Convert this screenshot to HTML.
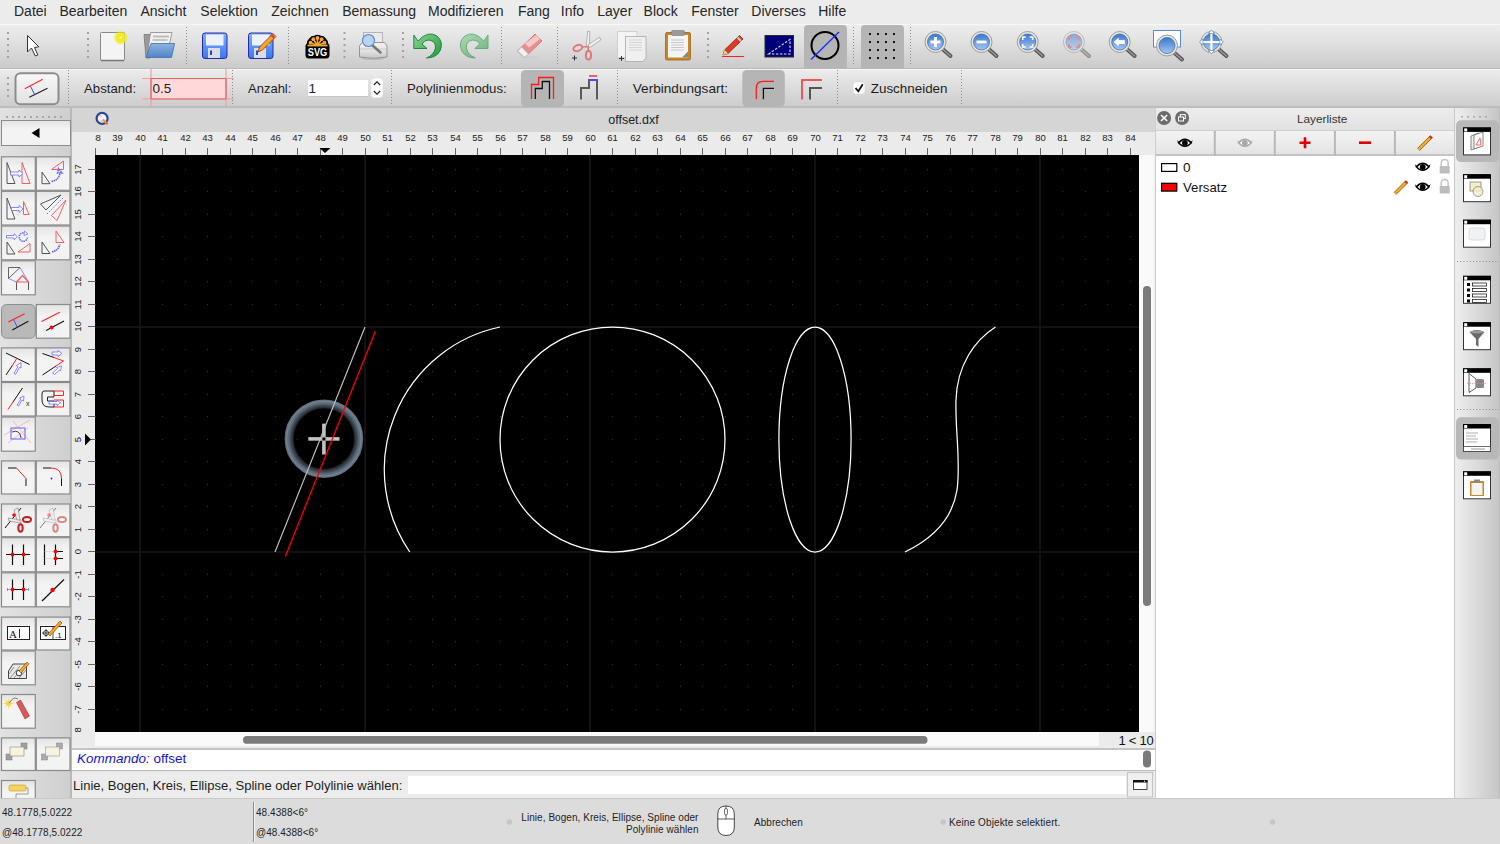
<!DOCTYPE html><html><head><meta charset="utf-8"><style>
*{margin:0;padding:0;box-sizing:border-box}
html,body{width:1500px;height:844px;overflow:hidden;background:#e6e6e6;font-family:"Liberation Sans",sans-serif;color:#1e1e1e}
.a{position:absolute}
.t{position:absolute;white-space:pre;line-height:16px;z-index:2}
.menu{font-size:14px;color:#262626}
.dotv{position:absolute;width:1px;border-left:1px dotted #8a8a8a}
.grip{position:absolute;width:3px}
.grip i{display:block;width:3px;height:3px;border-radius:2px;background:#b0b0b0;margin-bottom:3px}
.tb{position:absolute;border:1px solid #a9a9a9;background:linear-gradient(#f7f7f7,#e9e9e9);}
.act{position:absolute;background:#b6b6b6;border-radius:5px}
</style></head><body>
<div class="a" style="left:0;top:0;width:1500px;height:24px;background:#ececec"></div>
<div class="t menu" style="left:14px;top:2.5px">Datei</div>
<div class="t menu" style="left:59.5px;top:2.5px">Bearbeiten</div>
<div class="t menu" style="left:140.5px;top:2.5px">Ansicht</div>
<div class="t menu" style="left:200.3px;top:2.5px">Selektion</div>
<div class="t menu" style="left:271.2px;top:2.5px">Zeichnen</div>
<div class="t menu" style="left:342.2px;top:2.5px">Bemassung</div>
<div class="t menu" style="left:428px;top:2.5px">Modifizieren</div>
<div class="t menu" style="left:518px;top:2.5px">Fang</div>
<div class="t menu" style="left:560.8px;top:2.5px">Info</div>
<div class="t menu" style="left:597.3px;top:2.5px">Layer</div>
<div class="t menu" style="left:643.6px;top:2.5px">Block</div>
<div class="t menu" style="left:691.2px;top:2.5px">Fenster</div>
<div class="t menu" style="left:751.3px;top:2.5px">Diverses</div>
<div class="t menu" style="left:818.2px;top:2.5px">Hilfe</div>
<div class="a" style="left:0;top:24px;width:1500px;height:45px;background:linear-gradient(#ededed,#e4e4e4 30%,#cbcbcb);border-top:1px solid #f8f8f8;border-bottom:1px solid #b8b8b8"></div>
<div class="a" style="left:0;top:69px;width:1500px;height:39px;background:linear-gradient(#ececec,#e2e2e2 30%,#cdcdcd);border-top:1px solid #f6f6f6;border-bottom:2px solid #bdbdbd"></div>
<div class="t" style="left:84px;top:80.5px;font-size:13.2px;color:#1e1e1e">Abstand:</div>
<div class="t" style="left:248px;top:80.5px;font-size:13.0px;color:#1e1e1e">Anzahl:</div>
<div class="t" style="left:407px;top:80.5px;font-size:13.2px;color:#1e1e1e">Polylinienmodus:</div>
<div class="t" style="left:632.8px;top:80.5px;font-size:13.6px;color:#1e1e1e">Verbindungsart:</div>
<div class="t" style="left:870.8px;top:80.5px;font-size:13.4px;color:#1e1e1e">Zuschneiden</div>
<div class="t" style="left:152.5px;top:80.5px;font-size:13.5px;color:#1e1e1e">0.5</div>
<div class="t" style="left:308.5px;top:80.5px;font-size:13.5px;color:#1e1e1e">1</div>
<div class="a" style="left:0;top:108px;width:70px;height:690px;background:linear-gradient(90deg,#e2e2e2,#cfcfcf)"></div>
<div class="a" style="left:70px;top:108px;width:2px;height:690px;background:#b9b9b9"></div>
<div class="a" style="left:72px;top:108px;width:1083px;height:24px;background:#d5d5d5"></div>
<div class="t" style="left:533.5px;top:111.5px;width:200px;text-align:center;font-size:12.5px;color:#222">offset.dxf</div>
<div class="a" style="left:72px;top:132px;width:1083px;height:616px;background:#ebebeb"></div>
<div class="a" style="left:1139px;top:155px;width:16px;height:577px;background:linear-gradient(90deg,#fafafa 85%,#efefef)"></div>
<div class="a" style="left:95px;top:732px;width:1004px;height:14px;background:#fafafa"></div>
<div class="a" style="left:72px;top:746px;width:1083px;height:2px;background:#ececec"></div>
<svg class="a" style="left:95px;top:155px" width="1044" height="577" viewBox="95 155 1044 577"><rect x="95" y="155" width="1044" height="577" fill="#000"/><path d="M95 709h1v1h-1zM95 686h1v1h-1zM95 664h1v1h-1zM95 641h1v1h-1zM95 619h1v1h-1zM95 596h1v1h-1zM95 574h1v1h-1zM95 551h1v1h-1zM95 529h1v1h-1zM95 506h1v1h-1zM95 484h1v1h-1zM95 461h1v1h-1zM95 439h1v1h-1zM95 416h1v1h-1zM95 394h1v1h-1zM95 371h1v1h-1zM95 349h1v1h-1zM95 326h1v1h-1zM95 304h1v1h-1zM95 281h1v1h-1zM95 259h1v1h-1zM95 236h1v1h-1zM95 214h1v1h-1zM95 191h1v1h-1zM95 169h1v1h-1zM117 709h1v1h-1zM117 686h1v1h-1zM117 664h1v1h-1zM117 641h1v1h-1zM117 619h1v1h-1zM117 596h1v1h-1zM117 574h1v1h-1zM117 551h1v1h-1zM117 529h1v1h-1zM117 506h1v1h-1zM117 484h1v1h-1zM117 461h1v1h-1zM117 439h1v1h-1zM117 416h1v1h-1zM117 394h1v1h-1zM117 371h1v1h-1zM117 349h1v1h-1zM117 326h1v1h-1zM117 304h1v1h-1zM117 281h1v1h-1zM117 259h1v1h-1zM117 236h1v1h-1zM117 214h1v1h-1zM117 191h1v1h-1zM117 169h1v1h-1zM140 709h1v1h-1zM140 686h1v1h-1zM140 664h1v1h-1zM140 641h1v1h-1zM140 619h1v1h-1zM140 596h1v1h-1zM140 574h1v1h-1zM140 551h1v1h-1zM140 529h1v1h-1zM140 506h1v1h-1zM140 484h1v1h-1zM140 461h1v1h-1zM140 439h1v1h-1zM140 416h1v1h-1zM140 394h1v1h-1zM140 371h1v1h-1zM140 349h1v1h-1zM140 326h1v1h-1zM140 304h1v1h-1zM140 281h1v1h-1zM140 259h1v1h-1zM140 236h1v1h-1zM140 214h1v1h-1zM140 191h1v1h-1zM140 169h1v1h-1zM162 709h1v1h-1zM162 686h1v1h-1zM162 664h1v1h-1zM162 641h1v1h-1zM162 619h1v1h-1zM162 596h1v1h-1zM162 574h1v1h-1zM162 551h1v1h-1zM162 529h1v1h-1zM162 506h1v1h-1zM162 484h1v1h-1zM162 461h1v1h-1zM162 439h1v1h-1zM162 416h1v1h-1zM162 394h1v1h-1zM162 371h1v1h-1zM162 349h1v1h-1zM162 326h1v1h-1zM162 304h1v1h-1zM162 281h1v1h-1zM162 259h1v1h-1zM162 236h1v1h-1zM162 214h1v1h-1zM162 191h1v1h-1zM162 169h1v1h-1zM185 709h1v1h-1zM185 686h1v1h-1zM185 664h1v1h-1zM185 641h1v1h-1zM185 619h1v1h-1zM185 596h1v1h-1zM185 574h1v1h-1zM185 551h1v1h-1zM185 529h1v1h-1zM185 506h1v1h-1zM185 484h1v1h-1zM185 461h1v1h-1zM185 439h1v1h-1zM185 416h1v1h-1zM185 394h1v1h-1zM185 371h1v1h-1zM185 349h1v1h-1zM185 326h1v1h-1zM185 304h1v1h-1zM185 281h1v1h-1zM185 259h1v1h-1zM185 236h1v1h-1zM185 214h1v1h-1zM185 191h1v1h-1zM185 169h1v1h-1zM207 709h1v1h-1zM207 686h1v1h-1zM207 664h1v1h-1zM207 641h1v1h-1zM207 619h1v1h-1zM207 596h1v1h-1zM207 574h1v1h-1zM207 551h1v1h-1zM207 529h1v1h-1zM207 506h1v1h-1zM207 484h1v1h-1zM207 461h1v1h-1zM207 439h1v1h-1zM207 416h1v1h-1zM207 394h1v1h-1zM207 371h1v1h-1zM207 349h1v1h-1zM207 326h1v1h-1zM207 304h1v1h-1zM207 281h1v1h-1zM207 259h1v1h-1zM207 236h1v1h-1zM207 214h1v1h-1zM207 191h1v1h-1zM207 169h1v1h-1zM230 709h1v1h-1zM230 686h1v1h-1zM230 664h1v1h-1zM230 641h1v1h-1zM230 619h1v1h-1zM230 596h1v1h-1zM230 574h1v1h-1zM230 551h1v1h-1zM230 529h1v1h-1zM230 506h1v1h-1zM230 484h1v1h-1zM230 461h1v1h-1zM230 439h1v1h-1zM230 416h1v1h-1zM230 394h1v1h-1zM230 371h1v1h-1zM230 349h1v1h-1zM230 326h1v1h-1zM230 304h1v1h-1zM230 281h1v1h-1zM230 259h1v1h-1zM230 236h1v1h-1zM230 214h1v1h-1zM230 191h1v1h-1zM230 169h1v1h-1zM252 709h1v1h-1zM252 686h1v1h-1zM252 664h1v1h-1zM252 641h1v1h-1zM252 619h1v1h-1zM252 596h1v1h-1zM252 574h1v1h-1zM252 551h1v1h-1zM252 529h1v1h-1zM252 506h1v1h-1zM252 484h1v1h-1zM252 461h1v1h-1zM252 439h1v1h-1zM252 416h1v1h-1zM252 394h1v1h-1zM252 371h1v1h-1zM252 349h1v1h-1zM252 326h1v1h-1zM252 304h1v1h-1zM252 281h1v1h-1zM252 259h1v1h-1zM252 236h1v1h-1zM252 214h1v1h-1zM252 191h1v1h-1zM252 169h1v1h-1zM275 709h1v1h-1zM275 686h1v1h-1zM275 664h1v1h-1zM275 641h1v1h-1zM275 619h1v1h-1zM275 596h1v1h-1zM275 574h1v1h-1zM275 551h1v1h-1zM275 529h1v1h-1zM275 506h1v1h-1zM275 484h1v1h-1zM275 461h1v1h-1zM275 439h1v1h-1zM275 416h1v1h-1zM275 394h1v1h-1zM275 371h1v1h-1zM275 349h1v1h-1zM275 326h1v1h-1zM275 304h1v1h-1zM275 281h1v1h-1zM275 259h1v1h-1zM275 236h1v1h-1zM275 214h1v1h-1zM275 191h1v1h-1zM275 169h1v1h-1zM297 709h1v1h-1zM297 686h1v1h-1zM297 664h1v1h-1zM297 641h1v1h-1zM297 619h1v1h-1zM297 596h1v1h-1zM297 574h1v1h-1zM297 551h1v1h-1zM297 529h1v1h-1zM297 506h1v1h-1zM297 484h1v1h-1zM297 461h1v1h-1zM297 439h1v1h-1zM297 416h1v1h-1zM297 394h1v1h-1zM297 371h1v1h-1zM297 349h1v1h-1zM297 326h1v1h-1zM297 304h1v1h-1zM297 281h1v1h-1zM297 259h1v1h-1zM297 236h1v1h-1zM297 214h1v1h-1zM297 191h1v1h-1zM297 169h1v1h-1zM320 709h1v1h-1zM320 686h1v1h-1zM320 664h1v1h-1zM320 641h1v1h-1zM320 619h1v1h-1zM320 596h1v1h-1zM320 574h1v1h-1zM320 551h1v1h-1zM320 529h1v1h-1zM320 506h1v1h-1zM320 484h1v1h-1zM320 461h1v1h-1zM320 439h1v1h-1zM320 416h1v1h-1zM320 394h1v1h-1zM320 371h1v1h-1zM320 349h1v1h-1zM320 326h1v1h-1zM320 304h1v1h-1zM320 281h1v1h-1zM320 259h1v1h-1zM320 236h1v1h-1zM320 214h1v1h-1zM320 191h1v1h-1zM320 169h1v1h-1zM342 709h1v1h-1zM342 686h1v1h-1zM342 664h1v1h-1zM342 641h1v1h-1zM342 619h1v1h-1zM342 596h1v1h-1zM342 574h1v1h-1zM342 551h1v1h-1zM342 529h1v1h-1zM342 506h1v1h-1zM342 484h1v1h-1zM342 461h1v1h-1zM342 439h1v1h-1zM342 416h1v1h-1zM342 394h1v1h-1zM342 371h1v1h-1zM342 349h1v1h-1zM342 326h1v1h-1zM342 304h1v1h-1zM342 281h1v1h-1zM342 259h1v1h-1zM342 236h1v1h-1zM342 214h1v1h-1zM342 191h1v1h-1zM342 169h1v1h-1zM365 709h1v1h-1zM365 686h1v1h-1zM365 664h1v1h-1zM365 641h1v1h-1zM365 619h1v1h-1zM365 596h1v1h-1zM365 574h1v1h-1zM365 551h1v1h-1zM365 529h1v1h-1zM365 506h1v1h-1zM365 484h1v1h-1zM365 461h1v1h-1zM365 439h1v1h-1zM365 416h1v1h-1zM365 394h1v1h-1zM365 371h1v1h-1zM365 349h1v1h-1zM365 326h1v1h-1zM365 304h1v1h-1zM365 281h1v1h-1zM365 259h1v1h-1zM365 236h1v1h-1zM365 214h1v1h-1zM365 191h1v1h-1zM365 169h1v1h-1zM387 709h1v1h-1zM387 686h1v1h-1zM387 664h1v1h-1zM387 641h1v1h-1zM387 619h1v1h-1zM387 596h1v1h-1zM387 574h1v1h-1zM387 551h1v1h-1zM387 529h1v1h-1zM387 506h1v1h-1zM387 484h1v1h-1zM387 461h1v1h-1zM387 439h1v1h-1zM387 416h1v1h-1zM387 394h1v1h-1zM387 371h1v1h-1zM387 349h1v1h-1zM387 326h1v1h-1zM387 304h1v1h-1zM387 281h1v1h-1zM387 259h1v1h-1zM387 236h1v1h-1zM387 214h1v1h-1zM387 191h1v1h-1zM387 169h1v1h-1zM410 709h1v1h-1zM410 686h1v1h-1zM410 664h1v1h-1zM410 641h1v1h-1zM410 619h1v1h-1zM410 596h1v1h-1zM410 574h1v1h-1zM410 551h1v1h-1zM410 529h1v1h-1zM410 506h1v1h-1zM410 484h1v1h-1zM410 461h1v1h-1zM410 439h1v1h-1zM410 416h1v1h-1zM410 394h1v1h-1zM410 371h1v1h-1zM410 349h1v1h-1zM410 326h1v1h-1zM410 304h1v1h-1zM410 281h1v1h-1zM410 259h1v1h-1zM410 236h1v1h-1zM410 214h1v1h-1zM410 191h1v1h-1zM410 169h1v1h-1zM432 709h1v1h-1zM432 686h1v1h-1zM432 664h1v1h-1zM432 641h1v1h-1zM432 619h1v1h-1zM432 596h1v1h-1zM432 574h1v1h-1zM432 551h1v1h-1zM432 529h1v1h-1zM432 506h1v1h-1zM432 484h1v1h-1zM432 461h1v1h-1zM432 439h1v1h-1zM432 416h1v1h-1zM432 394h1v1h-1zM432 371h1v1h-1zM432 349h1v1h-1zM432 326h1v1h-1zM432 304h1v1h-1zM432 281h1v1h-1zM432 259h1v1h-1zM432 236h1v1h-1zM432 214h1v1h-1zM432 191h1v1h-1zM432 169h1v1h-1zM455 709h1v1h-1zM455 686h1v1h-1zM455 664h1v1h-1zM455 641h1v1h-1zM455 619h1v1h-1zM455 596h1v1h-1zM455 574h1v1h-1zM455 551h1v1h-1zM455 529h1v1h-1zM455 506h1v1h-1zM455 484h1v1h-1zM455 461h1v1h-1zM455 439h1v1h-1zM455 416h1v1h-1zM455 394h1v1h-1zM455 371h1v1h-1zM455 349h1v1h-1zM455 326h1v1h-1zM455 304h1v1h-1zM455 281h1v1h-1zM455 259h1v1h-1zM455 236h1v1h-1zM455 214h1v1h-1zM455 191h1v1h-1zM455 169h1v1h-1zM477 709h1v1h-1zM477 686h1v1h-1zM477 664h1v1h-1zM477 641h1v1h-1zM477 619h1v1h-1zM477 596h1v1h-1zM477 574h1v1h-1zM477 551h1v1h-1zM477 529h1v1h-1zM477 506h1v1h-1zM477 484h1v1h-1zM477 461h1v1h-1zM477 439h1v1h-1zM477 416h1v1h-1zM477 394h1v1h-1zM477 371h1v1h-1zM477 349h1v1h-1zM477 326h1v1h-1zM477 304h1v1h-1zM477 281h1v1h-1zM477 259h1v1h-1zM477 236h1v1h-1zM477 214h1v1h-1zM477 191h1v1h-1zM477 169h1v1h-1zM500 709h1v1h-1zM500 686h1v1h-1zM500 664h1v1h-1zM500 641h1v1h-1zM500 619h1v1h-1zM500 596h1v1h-1zM500 574h1v1h-1zM500 551h1v1h-1zM500 529h1v1h-1zM500 506h1v1h-1zM500 484h1v1h-1zM500 461h1v1h-1zM500 439h1v1h-1zM500 416h1v1h-1zM500 394h1v1h-1zM500 371h1v1h-1zM500 349h1v1h-1zM500 326h1v1h-1zM500 304h1v1h-1zM500 281h1v1h-1zM500 259h1v1h-1zM500 236h1v1h-1zM500 214h1v1h-1zM500 191h1v1h-1zM500 169h1v1h-1zM522 709h1v1h-1zM522 686h1v1h-1zM522 664h1v1h-1zM522 641h1v1h-1zM522 619h1v1h-1zM522 596h1v1h-1zM522 574h1v1h-1zM522 551h1v1h-1zM522 529h1v1h-1zM522 506h1v1h-1zM522 484h1v1h-1zM522 461h1v1h-1zM522 439h1v1h-1zM522 416h1v1h-1zM522 394h1v1h-1zM522 371h1v1h-1zM522 349h1v1h-1zM522 326h1v1h-1zM522 304h1v1h-1zM522 281h1v1h-1zM522 259h1v1h-1zM522 236h1v1h-1zM522 214h1v1h-1zM522 191h1v1h-1zM522 169h1v1h-1zM545 709h1v1h-1zM545 686h1v1h-1zM545 664h1v1h-1zM545 641h1v1h-1zM545 619h1v1h-1zM545 596h1v1h-1zM545 574h1v1h-1zM545 551h1v1h-1zM545 529h1v1h-1zM545 506h1v1h-1zM545 484h1v1h-1zM545 461h1v1h-1zM545 439h1v1h-1zM545 416h1v1h-1zM545 394h1v1h-1zM545 371h1v1h-1zM545 349h1v1h-1zM545 326h1v1h-1zM545 304h1v1h-1zM545 281h1v1h-1zM545 259h1v1h-1zM545 236h1v1h-1zM545 214h1v1h-1zM545 191h1v1h-1zM545 169h1v1h-1zM567 709h1v1h-1zM567 686h1v1h-1zM567 664h1v1h-1zM567 641h1v1h-1zM567 619h1v1h-1zM567 596h1v1h-1zM567 574h1v1h-1zM567 551h1v1h-1zM567 529h1v1h-1zM567 506h1v1h-1zM567 484h1v1h-1zM567 461h1v1h-1zM567 439h1v1h-1zM567 416h1v1h-1zM567 394h1v1h-1zM567 371h1v1h-1zM567 349h1v1h-1zM567 326h1v1h-1zM567 304h1v1h-1zM567 281h1v1h-1zM567 259h1v1h-1zM567 236h1v1h-1zM567 214h1v1h-1zM567 191h1v1h-1zM567 169h1v1h-1zM590 709h1v1h-1zM590 686h1v1h-1zM590 664h1v1h-1zM590 641h1v1h-1zM590 619h1v1h-1zM590 596h1v1h-1zM590 574h1v1h-1zM590 551h1v1h-1zM590 529h1v1h-1zM590 506h1v1h-1zM590 484h1v1h-1zM590 461h1v1h-1zM590 439h1v1h-1zM590 416h1v1h-1zM590 394h1v1h-1zM590 371h1v1h-1zM590 349h1v1h-1zM590 326h1v1h-1zM590 304h1v1h-1zM590 281h1v1h-1zM590 259h1v1h-1zM590 236h1v1h-1zM590 214h1v1h-1zM590 191h1v1h-1zM590 169h1v1h-1zM612 709h1v1h-1zM612 686h1v1h-1zM612 664h1v1h-1zM612 641h1v1h-1zM612 619h1v1h-1zM612 596h1v1h-1zM612 574h1v1h-1zM612 551h1v1h-1zM612 529h1v1h-1zM612 506h1v1h-1zM612 484h1v1h-1zM612 461h1v1h-1zM612 439h1v1h-1zM612 416h1v1h-1zM612 394h1v1h-1zM612 371h1v1h-1zM612 349h1v1h-1zM612 326h1v1h-1zM612 304h1v1h-1zM612 281h1v1h-1zM612 259h1v1h-1zM612 236h1v1h-1zM612 214h1v1h-1zM612 191h1v1h-1zM612 169h1v1h-1zM635 709h1v1h-1zM635 686h1v1h-1zM635 664h1v1h-1zM635 641h1v1h-1zM635 619h1v1h-1zM635 596h1v1h-1zM635 574h1v1h-1zM635 551h1v1h-1zM635 529h1v1h-1zM635 506h1v1h-1zM635 484h1v1h-1zM635 461h1v1h-1zM635 439h1v1h-1zM635 416h1v1h-1zM635 394h1v1h-1zM635 371h1v1h-1zM635 349h1v1h-1zM635 326h1v1h-1zM635 304h1v1h-1zM635 281h1v1h-1zM635 259h1v1h-1zM635 236h1v1h-1zM635 214h1v1h-1zM635 191h1v1h-1zM635 169h1v1h-1zM657 709h1v1h-1zM657 686h1v1h-1zM657 664h1v1h-1zM657 641h1v1h-1zM657 619h1v1h-1zM657 596h1v1h-1zM657 574h1v1h-1zM657 551h1v1h-1zM657 529h1v1h-1zM657 506h1v1h-1zM657 484h1v1h-1zM657 461h1v1h-1zM657 439h1v1h-1zM657 416h1v1h-1zM657 394h1v1h-1zM657 371h1v1h-1zM657 349h1v1h-1zM657 326h1v1h-1zM657 304h1v1h-1zM657 281h1v1h-1zM657 259h1v1h-1zM657 236h1v1h-1zM657 214h1v1h-1zM657 191h1v1h-1zM657 169h1v1h-1zM680 709h1v1h-1zM680 686h1v1h-1zM680 664h1v1h-1zM680 641h1v1h-1zM680 619h1v1h-1zM680 596h1v1h-1zM680 574h1v1h-1zM680 551h1v1h-1zM680 529h1v1h-1zM680 506h1v1h-1zM680 484h1v1h-1zM680 461h1v1h-1zM680 439h1v1h-1zM680 416h1v1h-1zM680 394h1v1h-1zM680 371h1v1h-1zM680 349h1v1h-1zM680 326h1v1h-1zM680 304h1v1h-1zM680 281h1v1h-1zM680 259h1v1h-1zM680 236h1v1h-1zM680 214h1v1h-1zM680 191h1v1h-1zM680 169h1v1h-1zM702 709h1v1h-1zM702 686h1v1h-1zM702 664h1v1h-1zM702 641h1v1h-1zM702 619h1v1h-1zM702 596h1v1h-1zM702 574h1v1h-1zM702 551h1v1h-1zM702 529h1v1h-1zM702 506h1v1h-1zM702 484h1v1h-1zM702 461h1v1h-1zM702 439h1v1h-1zM702 416h1v1h-1zM702 394h1v1h-1zM702 371h1v1h-1zM702 349h1v1h-1zM702 326h1v1h-1zM702 304h1v1h-1zM702 281h1v1h-1zM702 259h1v1h-1zM702 236h1v1h-1zM702 214h1v1h-1zM702 191h1v1h-1zM702 169h1v1h-1zM725 709h1v1h-1zM725 686h1v1h-1zM725 664h1v1h-1zM725 641h1v1h-1zM725 619h1v1h-1zM725 596h1v1h-1zM725 574h1v1h-1zM725 551h1v1h-1zM725 529h1v1h-1zM725 506h1v1h-1zM725 484h1v1h-1zM725 461h1v1h-1zM725 439h1v1h-1zM725 416h1v1h-1zM725 394h1v1h-1zM725 371h1v1h-1zM725 349h1v1h-1zM725 326h1v1h-1zM725 304h1v1h-1zM725 281h1v1h-1zM725 259h1v1h-1zM725 236h1v1h-1zM725 214h1v1h-1zM725 191h1v1h-1zM725 169h1v1h-1zM747 709h1v1h-1zM747 686h1v1h-1zM747 664h1v1h-1zM747 641h1v1h-1zM747 619h1v1h-1zM747 596h1v1h-1zM747 574h1v1h-1zM747 551h1v1h-1zM747 529h1v1h-1zM747 506h1v1h-1zM747 484h1v1h-1zM747 461h1v1h-1zM747 439h1v1h-1zM747 416h1v1h-1zM747 394h1v1h-1zM747 371h1v1h-1zM747 349h1v1h-1zM747 326h1v1h-1zM747 304h1v1h-1zM747 281h1v1h-1zM747 259h1v1h-1zM747 236h1v1h-1zM747 214h1v1h-1zM747 191h1v1h-1zM747 169h1v1h-1zM770 709h1v1h-1zM770 686h1v1h-1zM770 664h1v1h-1zM770 641h1v1h-1zM770 619h1v1h-1zM770 596h1v1h-1zM770 574h1v1h-1zM770 551h1v1h-1zM770 529h1v1h-1zM770 506h1v1h-1zM770 484h1v1h-1zM770 461h1v1h-1zM770 439h1v1h-1zM770 416h1v1h-1zM770 394h1v1h-1zM770 371h1v1h-1zM770 349h1v1h-1zM770 326h1v1h-1zM770 304h1v1h-1zM770 281h1v1h-1zM770 259h1v1h-1zM770 236h1v1h-1zM770 214h1v1h-1zM770 191h1v1h-1zM770 169h1v1h-1zM792 709h1v1h-1zM792 686h1v1h-1zM792 664h1v1h-1zM792 641h1v1h-1zM792 619h1v1h-1zM792 596h1v1h-1zM792 574h1v1h-1zM792 551h1v1h-1zM792 529h1v1h-1zM792 506h1v1h-1zM792 484h1v1h-1zM792 461h1v1h-1zM792 439h1v1h-1zM792 416h1v1h-1zM792 394h1v1h-1zM792 371h1v1h-1zM792 349h1v1h-1zM792 326h1v1h-1zM792 304h1v1h-1zM792 281h1v1h-1zM792 259h1v1h-1zM792 236h1v1h-1zM792 214h1v1h-1zM792 191h1v1h-1zM792 169h1v1h-1zM815 709h1v1h-1zM815 686h1v1h-1zM815 664h1v1h-1zM815 641h1v1h-1zM815 619h1v1h-1zM815 596h1v1h-1zM815 574h1v1h-1zM815 551h1v1h-1zM815 529h1v1h-1zM815 506h1v1h-1zM815 484h1v1h-1zM815 461h1v1h-1zM815 439h1v1h-1zM815 416h1v1h-1zM815 394h1v1h-1zM815 371h1v1h-1zM815 349h1v1h-1zM815 326h1v1h-1zM815 304h1v1h-1zM815 281h1v1h-1zM815 259h1v1h-1zM815 236h1v1h-1zM815 214h1v1h-1zM815 191h1v1h-1zM815 169h1v1h-1zM837 709h1v1h-1zM837 686h1v1h-1zM837 664h1v1h-1zM837 641h1v1h-1zM837 619h1v1h-1zM837 596h1v1h-1zM837 574h1v1h-1zM837 551h1v1h-1zM837 529h1v1h-1zM837 506h1v1h-1zM837 484h1v1h-1zM837 461h1v1h-1zM837 439h1v1h-1zM837 416h1v1h-1zM837 394h1v1h-1zM837 371h1v1h-1zM837 349h1v1h-1zM837 326h1v1h-1zM837 304h1v1h-1zM837 281h1v1h-1zM837 259h1v1h-1zM837 236h1v1h-1zM837 214h1v1h-1zM837 191h1v1h-1zM837 169h1v1h-1zM860 709h1v1h-1zM860 686h1v1h-1zM860 664h1v1h-1zM860 641h1v1h-1zM860 619h1v1h-1zM860 596h1v1h-1zM860 574h1v1h-1zM860 551h1v1h-1zM860 529h1v1h-1zM860 506h1v1h-1zM860 484h1v1h-1zM860 461h1v1h-1zM860 439h1v1h-1zM860 416h1v1h-1zM860 394h1v1h-1zM860 371h1v1h-1zM860 349h1v1h-1zM860 326h1v1h-1zM860 304h1v1h-1zM860 281h1v1h-1zM860 259h1v1h-1zM860 236h1v1h-1zM860 214h1v1h-1zM860 191h1v1h-1zM860 169h1v1h-1zM882 709h1v1h-1zM882 686h1v1h-1zM882 664h1v1h-1zM882 641h1v1h-1zM882 619h1v1h-1zM882 596h1v1h-1zM882 574h1v1h-1zM882 551h1v1h-1zM882 529h1v1h-1zM882 506h1v1h-1zM882 484h1v1h-1zM882 461h1v1h-1zM882 439h1v1h-1zM882 416h1v1h-1zM882 394h1v1h-1zM882 371h1v1h-1zM882 349h1v1h-1zM882 326h1v1h-1zM882 304h1v1h-1zM882 281h1v1h-1zM882 259h1v1h-1zM882 236h1v1h-1zM882 214h1v1h-1zM882 191h1v1h-1zM882 169h1v1h-1zM905 709h1v1h-1zM905 686h1v1h-1zM905 664h1v1h-1zM905 641h1v1h-1zM905 619h1v1h-1zM905 596h1v1h-1zM905 574h1v1h-1zM905 551h1v1h-1zM905 529h1v1h-1zM905 506h1v1h-1zM905 484h1v1h-1zM905 461h1v1h-1zM905 439h1v1h-1zM905 416h1v1h-1zM905 394h1v1h-1zM905 371h1v1h-1zM905 349h1v1h-1zM905 326h1v1h-1zM905 304h1v1h-1zM905 281h1v1h-1zM905 259h1v1h-1zM905 236h1v1h-1zM905 214h1v1h-1zM905 191h1v1h-1zM905 169h1v1h-1zM927 709h1v1h-1zM927 686h1v1h-1zM927 664h1v1h-1zM927 641h1v1h-1zM927 619h1v1h-1zM927 596h1v1h-1zM927 574h1v1h-1zM927 551h1v1h-1zM927 529h1v1h-1zM927 506h1v1h-1zM927 484h1v1h-1zM927 461h1v1h-1zM927 439h1v1h-1zM927 416h1v1h-1zM927 394h1v1h-1zM927 371h1v1h-1zM927 349h1v1h-1zM927 326h1v1h-1zM927 304h1v1h-1zM927 281h1v1h-1zM927 259h1v1h-1zM927 236h1v1h-1zM927 214h1v1h-1zM927 191h1v1h-1zM927 169h1v1h-1zM950 709h1v1h-1zM950 686h1v1h-1zM950 664h1v1h-1zM950 641h1v1h-1zM950 619h1v1h-1zM950 596h1v1h-1zM950 574h1v1h-1zM950 551h1v1h-1zM950 529h1v1h-1zM950 506h1v1h-1zM950 484h1v1h-1zM950 461h1v1h-1zM950 439h1v1h-1zM950 416h1v1h-1zM950 394h1v1h-1zM950 371h1v1h-1zM950 349h1v1h-1zM950 326h1v1h-1zM950 304h1v1h-1zM950 281h1v1h-1zM950 259h1v1h-1zM950 236h1v1h-1zM950 214h1v1h-1zM950 191h1v1h-1zM950 169h1v1h-1zM972 709h1v1h-1zM972 686h1v1h-1zM972 664h1v1h-1zM972 641h1v1h-1zM972 619h1v1h-1zM972 596h1v1h-1zM972 574h1v1h-1zM972 551h1v1h-1zM972 529h1v1h-1zM972 506h1v1h-1zM972 484h1v1h-1zM972 461h1v1h-1zM972 439h1v1h-1zM972 416h1v1h-1zM972 394h1v1h-1zM972 371h1v1h-1zM972 349h1v1h-1zM972 326h1v1h-1zM972 304h1v1h-1zM972 281h1v1h-1zM972 259h1v1h-1zM972 236h1v1h-1zM972 214h1v1h-1zM972 191h1v1h-1zM972 169h1v1h-1zM995 709h1v1h-1zM995 686h1v1h-1zM995 664h1v1h-1zM995 641h1v1h-1zM995 619h1v1h-1zM995 596h1v1h-1zM995 574h1v1h-1zM995 551h1v1h-1zM995 529h1v1h-1zM995 506h1v1h-1zM995 484h1v1h-1zM995 461h1v1h-1zM995 439h1v1h-1zM995 416h1v1h-1zM995 394h1v1h-1zM995 371h1v1h-1zM995 349h1v1h-1zM995 326h1v1h-1zM995 304h1v1h-1zM995 281h1v1h-1zM995 259h1v1h-1zM995 236h1v1h-1zM995 214h1v1h-1zM995 191h1v1h-1zM995 169h1v1h-1zM1017 709h1v1h-1zM1017 686h1v1h-1zM1017 664h1v1h-1zM1017 641h1v1h-1zM1017 619h1v1h-1zM1017 596h1v1h-1zM1017 574h1v1h-1zM1017 551h1v1h-1zM1017 529h1v1h-1zM1017 506h1v1h-1zM1017 484h1v1h-1zM1017 461h1v1h-1zM1017 439h1v1h-1zM1017 416h1v1h-1zM1017 394h1v1h-1zM1017 371h1v1h-1zM1017 349h1v1h-1zM1017 326h1v1h-1zM1017 304h1v1h-1zM1017 281h1v1h-1zM1017 259h1v1h-1zM1017 236h1v1h-1zM1017 214h1v1h-1zM1017 191h1v1h-1zM1017 169h1v1h-1zM1040 709h1v1h-1zM1040 686h1v1h-1zM1040 664h1v1h-1zM1040 641h1v1h-1zM1040 619h1v1h-1zM1040 596h1v1h-1zM1040 574h1v1h-1zM1040 551h1v1h-1zM1040 529h1v1h-1zM1040 506h1v1h-1zM1040 484h1v1h-1zM1040 461h1v1h-1zM1040 439h1v1h-1zM1040 416h1v1h-1zM1040 394h1v1h-1zM1040 371h1v1h-1zM1040 349h1v1h-1zM1040 326h1v1h-1zM1040 304h1v1h-1zM1040 281h1v1h-1zM1040 259h1v1h-1zM1040 236h1v1h-1zM1040 214h1v1h-1zM1040 191h1v1h-1zM1040 169h1v1h-1zM1062 709h1v1h-1zM1062 686h1v1h-1zM1062 664h1v1h-1zM1062 641h1v1h-1zM1062 619h1v1h-1zM1062 596h1v1h-1zM1062 574h1v1h-1zM1062 551h1v1h-1zM1062 529h1v1h-1zM1062 506h1v1h-1zM1062 484h1v1h-1zM1062 461h1v1h-1zM1062 439h1v1h-1zM1062 416h1v1h-1zM1062 394h1v1h-1zM1062 371h1v1h-1zM1062 349h1v1h-1zM1062 326h1v1h-1zM1062 304h1v1h-1zM1062 281h1v1h-1zM1062 259h1v1h-1zM1062 236h1v1h-1zM1062 214h1v1h-1zM1062 191h1v1h-1zM1062 169h1v1h-1zM1085 709h1v1h-1zM1085 686h1v1h-1zM1085 664h1v1h-1zM1085 641h1v1h-1zM1085 619h1v1h-1zM1085 596h1v1h-1zM1085 574h1v1h-1zM1085 551h1v1h-1zM1085 529h1v1h-1zM1085 506h1v1h-1zM1085 484h1v1h-1zM1085 461h1v1h-1zM1085 439h1v1h-1zM1085 416h1v1h-1zM1085 394h1v1h-1zM1085 371h1v1h-1zM1085 349h1v1h-1zM1085 326h1v1h-1zM1085 304h1v1h-1zM1085 281h1v1h-1zM1085 259h1v1h-1zM1085 236h1v1h-1zM1085 214h1v1h-1zM1085 191h1v1h-1zM1085 169h1v1h-1zM1107 709h1v1h-1zM1107 686h1v1h-1zM1107 664h1v1h-1zM1107 641h1v1h-1zM1107 619h1v1h-1zM1107 596h1v1h-1zM1107 574h1v1h-1zM1107 551h1v1h-1zM1107 529h1v1h-1zM1107 506h1v1h-1zM1107 484h1v1h-1zM1107 461h1v1h-1zM1107 439h1v1h-1zM1107 416h1v1h-1zM1107 394h1v1h-1zM1107 371h1v1h-1zM1107 349h1v1h-1zM1107 326h1v1h-1zM1107 304h1v1h-1zM1107 281h1v1h-1zM1107 259h1v1h-1zM1107 236h1v1h-1zM1107 214h1v1h-1zM1107 191h1v1h-1zM1107 169h1v1h-1zM1130 709h1v1h-1zM1130 686h1v1h-1zM1130 664h1v1h-1zM1130 641h1v1h-1zM1130 619h1v1h-1zM1130 596h1v1h-1zM1130 574h1v1h-1zM1130 551h1v1h-1zM1130 529h1v1h-1zM1130 506h1v1h-1zM1130 484h1v1h-1zM1130 461h1v1h-1zM1130 439h1v1h-1zM1130 416h1v1h-1zM1130 394h1v1h-1zM1130 371h1v1h-1zM1130 349h1v1h-1zM1130 326h1v1h-1zM1130 304h1v1h-1zM1130 281h1v1h-1zM1130 259h1v1h-1zM1130 236h1v1h-1zM1130 214h1v1h-1zM1130 191h1v1h-1zM1130 169h1v1h-1z" fill="#3a3a3a"/><rect x="139" y="155" width="2" height="577" fill="#121212"/><rect x="364" y="155" width="2" height="577" fill="#121212"/><rect x="589" y="155" width="2" height="577" fill="#121212"/><rect x="814" y="155" width="2" height="577" fill="#121212"/><rect x="1039" y="155" width="2" height="577" fill="#121212"/><rect x="95" y="551" width="1044" height="2" fill="#121212"/><rect x="95" y="326" width="1044" height="2" fill="#121212"/><circle cx="612.5" cy="439.5" r="112.5" fill="none" stroke="#fff" stroke-width="1.25"/><ellipse cx="815" cy="439.5" rx="36.1" ry="112.5" fill="none" stroke="#fff" stroke-width="1.25"/><path d="M500 327 A145.8 145.8 0 0 0 409.8 552" fill="none" stroke="#fff" stroke-width="1.25"/><path d="M904.9 552 C930 540 952 522 957 490 C961 462 955 430 956 400 C957 365 975 340 995.5 327" fill="none" stroke="#fff" stroke-width="1.25"/><defs><radialGradient id="ring" gradientUnits="userSpaceOnUse" cx="323.9" cy="438.7" r="39.3"><stop offset="0.74" stop-color="#000"/><stop offset="0.8" stop-color="#2a323a"/><stop offset="0.88" stop-color="#4f5c69"/><stop offset="0.95" stop-color="#6d7c8b"/><stop offset="1" stop-color="#5a6773"/></radialGradient></defs><circle cx="323.9" cy="438.7" r="34.6" fill="none" stroke="url(#ring)" stroke-width="9.4"/><circle cx="323.9" cy="438.7" r="37.2" fill="none" stroke="#8898a8" stroke-width="0.6" opacity="0.45"/><circle cx="323.9" cy="438.7" r="35.2" fill="none" stroke="#8898a8" stroke-width="0.6" opacity="0.3"/><rect x="308.3" y="437.1" width="31.2" height="3.6" fill="#c2c2c2"/><rect x="322.1" y="423.6" width="3.6" height="30.9" fill="#c2c2c2"/><circle cx="323.9" cy="438.9" r="2" fill="#000" stroke="#999" stroke-width="0.8"/><line x1="365" y1="327" x2="275" y2="552" stroke="#bdbdbd" stroke-width="1.2"/><line x1="375.45" y1="331.2" x2="285.45" y2="556.2" stroke="#ff0000" stroke-width="1.3"/></svg>
<svg class="a" style="left:95px;top:132px" width="1058" height="23" viewBox="95 132 1058 23"><clipPath id="hrc"><rect x="95" y="132" width="1044" height="23"/></clipPath><g clip-path="url(#hrc)"><rect x="95.0" y="148" width="1" height="7" fill="#666"/><text x="95.5" y="141" font-size="9.5" text-anchor="middle" fill="#222" font-family="Liberation Sans">38</text><rect x="117.0" y="148" width="1" height="7" fill="#666"/><text x="117.5" y="141" font-size="9.5" text-anchor="middle" fill="#222" font-family="Liberation Sans">39</text><rect x="140.0" y="148" width="1" height="7" fill="#666"/><text x="140.5" y="141" font-size="9.5" text-anchor="middle" fill="#222" font-family="Liberation Sans">40</text><rect x="162.0" y="148" width="1" height="7" fill="#666"/><text x="162.5" y="141" font-size="9.5" text-anchor="middle" fill="#222" font-family="Liberation Sans">41</text><rect x="185.0" y="148" width="1" height="7" fill="#666"/><text x="185.5" y="141" font-size="9.5" text-anchor="middle" fill="#222" font-family="Liberation Sans">42</text><rect x="207.0" y="148" width="1" height="7" fill="#666"/><text x="207.5" y="141" font-size="9.5" text-anchor="middle" fill="#222" font-family="Liberation Sans">43</text><rect x="230.0" y="148" width="1" height="7" fill="#666"/><text x="230.5" y="141" font-size="9.5" text-anchor="middle" fill="#222" font-family="Liberation Sans">44</text><rect x="252.0" y="148" width="1" height="7" fill="#666"/><text x="252.5" y="141" font-size="9.5" text-anchor="middle" fill="#222" font-family="Liberation Sans">45</text><rect x="275.0" y="148" width="1" height="7" fill="#666"/><text x="275.5" y="141" font-size="9.5" text-anchor="middle" fill="#222" font-family="Liberation Sans">46</text><rect x="297.0" y="148" width="1" height="7" fill="#666"/><text x="297.5" y="141" font-size="9.5" text-anchor="middle" fill="#222" font-family="Liberation Sans">47</text><rect x="320.0" y="148" width="1" height="7" fill="#666"/><text x="320.5" y="141" font-size="9.5" text-anchor="middle" fill="#222" font-family="Liberation Sans">48</text><rect x="342.0" y="148" width="1" height="7" fill="#666"/><text x="342.5" y="141" font-size="9.5" text-anchor="middle" fill="#222" font-family="Liberation Sans">49</text><rect x="365.0" y="148" width="1" height="7" fill="#666"/><text x="365.5" y="141" font-size="9.5" text-anchor="middle" fill="#222" font-family="Liberation Sans">50</text><rect x="387.0" y="148" width="1" height="7" fill="#666"/><text x="387.5" y="141" font-size="9.5" text-anchor="middle" fill="#222" font-family="Liberation Sans">51</text><rect x="410.0" y="148" width="1" height="7" fill="#666"/><text x="410.5" y="141" font-size="9.5" text-anchor="middle" fill="#222" font-family="Liberation Sans">52</text><rect x="432.0" y="148" width="1" height="7" fill="#666"/><text x="432.5" y="141" font-size="9.5" text-anchor="middle" fill="#222" font-family="Liberation Sans">53</text><rect x="455.0" y="148" width="1" height="7" fill="#666"/><text x="455.5" y="141" font-size="9.5" text-anchor="middle" fill="#222" font-family="Liberation Sans">54</text><rect x="477.0" y="148" width="1" height="7" fill="#666"/><text x="477.5" y="141" font-size="9.5" text-anchor="middle" fill="#222" font-family="Liberation Sans">55</text><rect x="500.0" y="148" width="1" height="7" fill="#666"/><text x="500.5" y="141" font-size="9.5" text-anchor="middle" fill="#222" font-family="Liberation Sans">56</text><rect x="522.0" y="148" width="1" height="7" fill="#666"/><text x="522.5" y="141" font-size="9.5" text-anchor="middle" fill="#222" font-family="Liberation Sans">57</text><rect x="545.0" y="148" width="1" height="7" fill="#666"/><text x="545.5" y="141" font-size="9.5" text-anchor="middle" fill="#222" font-family="Liberation Sans">58</text><rect x="567.0" y="148" width="1" height="7" fill="#666"/><text x="567.5" y="141" font-size="9.5" text-anchor="middle" fill="#222" font-family="Liberation Sans">59</text><rect x="590.0" y="148" width="1" height="7" fill="#666"/><text x="590.5" y="141" font-size="9.5" text-anchor="middle" fill="#222" font-family="Liberation Sans">60</text><rect x="612.0" y="148" width="1" height="7" fill="#666"/><text x="612.5" y="141" font-size="9.5" text-anchor="middle" fill="#222" font-family="Liberation Sans">61</text><rect x="635.0" y="148" width="1" height="7" fill="#666"/><text x="635.5" y="141" font-size="9.5" text-anchor="middle" fill="#222" font-family="Liberation Sans">62</text><rect x="657.0" y="148" width="1" height="7" fill="#666"/><text x="657.5" y="141" font-size="9.5" text-anchor="middle" fill="#222" font-family="Liberation Sans">63</text><rect x="680.0" y="148" width="1" height="7" fill="#666"/><text x="680.5" y="141" font-size="9.5" text-anchor="middle" fill="#222" font-family="Liberation Sans">64</text><rect x="702.0" y="148" width="1" height="7" fill="#666"/><text x="702.5" y="141" font-size="9.5" text-anchor="middle" fill="#222" font-family="Liberation Sans">65</text><rect x="725.0" y="148" width="1" height="7" fill="#666"/><text x="725.5" y="141" font-size="9.5" text-anchor="middle" fill="#222" font-family="Liberation Sans">66</text><rect x="747.0" y="148" width="1" height="7" fill="#666"/><text x="747.5" y="141" font-size="9.5" text-anchor="middle" fill="#222" font-family="Liberation Sans">67</text><rect x="770.0" y="148" width="1" height="7" fill="#666"/><text x="770.5" y="141" font-size="9.5" text-anchor="middle" fill="#222" font-family="Liberation Sans">68</text><rect x="792.0" y="148" width="1" height="7" fill="#666"/><text x="792.5" y="141" font-size="9.5" text-anchor="middle" fill="#222" font-family="Liberation Sans">69</text><rect x="815.0" y="148" width="1" height="7" fill="#666"/><text x="815.5" y="141" font-size="9.5" text-anchor="middle" fill="#222" font-family="Liberation Sans">70</text><rect x="837.0" y="148" width="1" height="7" fill="#666"/><text x="837.5" y="141" font-size="9.5" text-anchor="middle" fill="#222" font-family="Liberation Sans">71</text><rect x="860.0" y="148" width="1" height="7" fill="#666"/><text x="860.5" y="141" font-size="9.5" text-anchor="middle" fill="#222" font-family="Liberation Sans">72</text><rect x="882.0" y="148" width="1" height="7" fill="#666"/><text x="882.5" y="141" font-size="9.5" text-anchor="middle" fill="#222" font-family="Liberation Sans">73</text><rect x="905.0" y="148" width="1" height="7" fill="#666"/><text x="905.5" y="141" font-size="9.5" text-anchor="middle" fill="#222" font-family="Liberation Sans">74</text><rect x="927.0" y="148" width="1" height="7" fill="#666"/><text x="927.5" y="141" font-size="9.5" text-anchor="middle" fill="#222" font-family="Liberation Sans">75</text><rect x="950.0" y="148" width="1" height="7" fill="#666"/><text x="950.5" y="141" font-size="9.5" text-anchor="middle" fill="#222" font-family="Liberation Sans">76</text><rect x="972.0" y="148" width="1" height="7" fill="#666"/><text x="972.5" y="141" font-size="9.5" text-anchor="middle" fill="#222" font-family="Liberation Sans">77</text><rect x="995.0" y="148" width="1" height="7" fill="#666"/><text x="995.5" y="141" font-size="9.5" text-anchor="middle" fill="#222" font-family="Liberation Sans">78</text><rect x="1017.0" y="148" width="1" height="7" fill="#666"/><text x="1017.5" y="141" font-size="9.5" text-anchor="middle" fill="#222" font-family="Liberation Sans">79</text><rect x="1040.0" y="148" width="1" height="7" fill="#666"/><text x="1040.5" y="141" font-size="9.5" text-anchor="middle" fill="#222" font-family="Liberation Sans">80</text><rect x="1062.0" y="148" width="1" height="7" fill="#666"/><text x="1062.5" y="141" font-size="9.5" text-anchor="middle" fill="#222" font-family="Liberation Sans">81</text><rect x="1085.0" y="148" width="1" height="7" fill="#666"/><text x="1085.5" y="141" font-size="9.5" text-anchor="middle" fill="#222" font-family="Liberation Sans">82</text><rect x="1107.0" y="148" width="1" height="7" fill="#666"/><text x="1107.5" y="141" font-size="9.5" text-anchor="middle" fill="#222" font-family="Liberation Sans">83</text><rect x="1130.0" y="148" width="1" height="7" fill="#666"/><text x="1130.5" y="141" font-size="9.5" text-anchor="middle" fill="#222" font-family="Liberation Sans">84</text><rect x="1152.0" y="148" width="1" height="7" fill="#666"/><text x="1152.5" y="141" font-size="9.5" text-anchor="middle" fill="#222" font-family="Liberation Sans">85</text><path d="M319.5 148 L330.5 148 L325 153 Z" fill="#000"/></g></svg>
<svg class="a" style="left:72px;top:155px" width="23" height="577" viewBox="72 155 23 577"><text transform="translate(81 731.50) rotate(-90)" x="0" y="0" font-size="9.5" text-anchor="middle" fill="#222" font-family="Liberation Sans">-8</text><rect x="88" y="709.0" width="7" height="1" fill="#666"/><text transform="translate(81 709.50) rotate(-90)" x="0" y="0" font-size="9.5" text-anchor="middle" fill="#222" font-family="Liberation Sans">-7</text><rect x="88" y="686.0" width="7" height="1" fill="#666"/><text transform="translate(81 686.50) rotate(-90)" x="0" y="0" font-size="9.5" text-anchor="middle" fill="#222" font-family="Liberation Sans">-6</text><rect x="88" y="664.0" width="7" height="1" fill="#666"/><text transform="translate(81 664.50) rotate(-90)" x="0" y="0" font-size="9.5" text-anchor="middle" fill="#222" font-family="Liberation Sans">-5</text><rect x="88" y="641.0" width="7" height="1" fill="#666"/><text transform="translate(81 641.50) rotate(-90)" x="0" y="0" font-size="9.5" text-anchor="middle" fill="#222" font-family="Liberation Sans">-4</text><rect x="88" y="619.0" width="7" height="1" fill="#666"/><text transform="translate(81 619.50) rotate(-90)" x="0" y="0" font-size="9.5" text-anchor="middle" fill="#222" font-family="Liberation Sans">-3</text><rect x="88" y="596.0" width="7" height="1" fill="#666"/><text transform="translate(81 596.50) rotate(-90)" x="0" y="0" font-size="9.5" text-anchor="middle" fill="#222" font-family="Liberation Sans">-2</text><rect x="88" y="574.0" width="7" height="1" fill="#666"/><text transform="translate(81 574.50) rotate(-90)" x="0" y="0" font-size="9.5" text-anchor="middle" fill="#222" font-family="Liberation Sans">-1</text><rect x="88" y="551.0" width="7" height="1" fill="#666"/><text transform="translate(81 551.50) rotate(-90)" x="0" y="0" font-size="9.5" text-anchor="middle" fill="#222" font-family="Liberation Sans">0</text><rect x="88" y="529.0" width="7" height="1" fill="#666"/><text transform="translate(81 529.50) rotate(-90)" x="0" y="0" font-size="9.5" text-anchor="middle" fill="#222" font-family="Liberation Sans">1</text><rect x="88" y="506.0" width="7" height="1" fill="#666"/><text transform="translate(81 506.50) rotate(-90)" x="0" y="0" font-size="9.5" text-anchor="middle" fill="#222" font-family="Liberation Sans">2</text><rect x="88" y="484.0" width="7" height="1" fill="#666"/><text transform="translate(81 484.50) rotate(-90)" x="0" y="0" font-size="9.5" text-anchor="middle" fill="#222" font-family="Liberation Sans">3</text><rect x="88" y="461.0" width="7" height="1" fill="#666"/><text transform="translate(81 461.50) rotate(-90)" x="0" y="0" font-size="9.5" text-anchor="middle" fill="#222" font-family="Liberation Sans">4</text><rect x="88" y="439.0" width="7" height="1" fill="#666"/><text transform="translate(81 439.50) rotate(-90)" x="0" y="0" font-size="9.5" text-anchor="middle" fill="#222" font-family="Liberation Sans">5</text><rect x="88" y="416.0" width="7" height="1" fill="#666"/><text transform="translate(81 416.50) rotate(-90)" x="0" y="0" font-size="9.5" text-anchor="middle" fill="#222" font-family="Liberation Sans">6</text><rect x="88" y="394.0" width="7" height="1" fill="#666"/><text transform="translate(81 394.50) rotate(-90)" x="0" y="0" font-size="9.5" text-anchor="middle" fill="#222" font-family="Liberation Sans">7</text><rect x="88" y="371.0" width="7" height="1" fill="#666"/><text transform="translate(81 371.50) rotate(-90)" x="0" y="0" font-size="9.5" text-anchor="middle" fill="#222" font-family="Liberation Sans">8</text><rect x="88" y="349.0" width="7" height="1" fill="#666"/><text transform="translate(81 349.50) rotate(-90)" x="0" y="0" font-size="9.5" text-anchor="middle" fill="#222" font-family="Liberation Sans">9</text><rect x="88" y="326.0" width="7" height="1" fill="#666"/><text transform="translate(81 326.50) rotate(-90)" x="0" y="0" font-size="9.5" text-anchor="middle" fill="#222" font-family="Liberation Sans">10</text><rect x="88" y="304.0" width="7" height="1" fill="#666"/><text transform="translate(81 304.50) rotate(-90)" x="0" y="0" font-size="9.5" text-anchor="middle" fill="#222" font-family="Liberation Sans">11</text><rect x="88" y="281.0" width="7" height="1" fill="#666"/><text transform="translate(81 281.50) rotate(-90)" x="0" y="0" font-size="9.5" text-anchor="middle" fill="#222" font-family="Liberation Sans">12</text><rect x="88" y="259.0" width="7" height="1" fill="#666"/><text transform="translate(81 259.50) rotate(-90)" x="0" y="0" font-size="9.5" text-anchor="middle" fill="#222" font-family="Liberation Sans">13</text><rect x="88" y="236.0" width="7" height="1" fill="#666"/><text transform="translate(81 236.50) rotate(-90)" x="0" y="0" font-size="9.5" text-anchor="middle" fill="#222" font-family="Liberation Sans">14</text><rect x="88" y="214.0" width="7" height="1" fill="#666"/><text transform="translate(81 214.50) rotate(-90)" x="0" y="0" font-size="9.5" text-anchor="middle" fill="#222" font-family="Liberation Sans">15</text><rect x="88" y="191.0" width="7" height="1" fill="#666"/><text transform="translate(81 191.50) rotate(-90)" x="0" y="0" font-size="9.5" text-anchor="middle" fill="#222" font-family="Liberation Sans">16</text><rect x="88" y="169.0" width="7" height="1" fill="#666"/><text transform="translate(81 169.50) rotate(-90)" x="0" y="0" font-size="9.5" text-anchor="middle" fill="#222" font-family="Liberation Sans">17</text><path d="M85 433.5 L91 439.5 L85 445.5 Z" fill="#000"/></svg>
<div class="t" style="left:1053.5px;top:733px;width:100px;text-align:right;font-size:13px;letter-spacing:-0.25px;color:#111">1 &lt; 10</div>
<div class="a" style="left:72px;top:748px;width:1083px;height:2px;background:#c4c4c4"></div>
<div class="a" style="left:72px;top:750px;width:1083px;height:21px;background:#fff;border-bottom:1px solid #bdbdbd"></div>
<div class="t" style="left:77px;top:751px;font-size:13.5px;color:#1414cc;font-style:italic">Kommando: <span style="font-style:normal">offset</span></div>
<div class="a" style="left:72px;top:772px;width:1083px;height:26px;background:#ececec"></div>
<div class="t" style="left:73px;top:777.5px;font-size:13.05px;color:#1e1e1e">Linie, Bogen, Kreis, Ellipse, Spline oder Polylinie wählen:</div>
<div class="a" style="left:408px;top:776px;width:718px;height:18px;background:#fff"></div>
<div class="a" style="left:1155px;top:108px;width:1px;height:690px;background:#cdcdcd"></div>
<div class="a" style="left:1156px;top:108px;width:298px;height:690px;background:#fff"></div>
<div class="a" style="left:1156px;top:108px;width:298px;height:23px;background:linear-gradient(#ededed,#e2e2e2);border-bottom:1px solid #cfcfcf"></div>
<div class="t" style="left:1222.2px;top:110.5px;width:200px;text-align:center;font-size:11.8px;color:#333">Layerliste</div>
<div class="a" style="left:1156px;top:131px;width:298px;height:25px;background:linear-gradient(#f3f3f3,#e4e4e4);border-bottom:2px solid #c4c4c4"></div>
<div class="t" style="left:1183px;top:159.5px;font-size:13.5px;color:#111">0</div>
<div class="t" style="left:1183px;top:179.5px;font-size:13.2px;color:#111">Versatz</div>
<div class="a" style="left:1454px;top:108px;width:1px;height:690px;background:#c8c8c8"></div>
<div class="a" style="left:1455px;top:108px;width:45px;height:690px;background:linear-gradient(90deg,#eeeeee,#dcdcdc 45%,#c6c6c6 97%,#b9b9b9)"></div>
<div class="a" style="left:0;top:798px;width:1500px;height:46px;background:#dcdcdc;border-top:1px solid #c8c8c8"></div>
<div class="t" style="left:2px;top:806.5px;font-size:10px;color:#1e1e1e;letter-spacing:0.05px;line-height:12px">48.1778,5.0222</div>
<div class="t" style="left:2px;top:826.5px;font-size:10px;color:#1e1e1e;letter-spacing:0.05px;line-height:12px">@48.1778,5.0222</div>
<div class="t" style="left:256px;top:806.5px;font-size:10px;color:#1e1e1e;letter-spacing:0.05px;line-height:12px">48.4388&lt;6°</div>
<div class="t" style="left:256px;top:826.5px;font-size:10px;color:#1e1e1e;letter-spacing:0.05px;line-height:12px">@48.4388&lt;6°</div>
<div class="t" style="left:400px;top:811.5px;width:298.5px;text-align:right;font-size:10px;color:#1e1e1e;letter-spacing:0.05px;line-height:12px">Linie, Bogen, Kreis, Ellipse, Spline oder<br>Polylinie wählen</div>
<div class="t" style="left:754px;top:816.5px;font-size:10px;color:#1e1e1e;letter-spacing:0.05px;line-height:12px">Abbrechen</div>
<div class="t" style="left:949px;top:816.5px;font-size:10px;color:#1e1e1e;letter-spacing:0.05px;line-height:12px;letter-spacing:0.12px">Keine Objekte selektiert.</div>
<svg class="a" style="left:0;top:0" width="1500" height="844" viewBox="0 0 1500 844"><defs><linearGradient id="btng" x1="0" y1="0" x2="0" y2="1"><stop offset="0" stop-color="#f8f8f8"/><stop offset="1" stop-color="#e2e2e2"/></linearGradient><linearGradient id="lensg" x1="0" y1="0" x2="0" y2="1"><stop offset="0" stop-color="#3d78cc"/><stop offset="0.5" stop-color="#6e9ee0"/><stop offset="1" stop-color="#a9c7ef"/></linearGradient><linearGradient id="folder" x1="0" y1="0" x2="0" y2="1"><stop offset="0" stop-color="#8fb3e0"/><stop offset="1" stop-color="#4e86c8"/></linearGradient><linearGradient id="flop" x1="0" y1="0" x2="0" y2="1"><stop offset="0" stop-color="#7fb0ff"/><stop offset="1" stop-color="#3a78f0"/></linearGradient><linearGradient id="green" x1="0" y1="0" x2="1" y2="1"><stop offset="0" stop-color="#8fd48f"/><stop offset="1" stop-color="#1e9a3a"/></linearGradient><linearGradient id="prn" x1="0" y1="0" x2="0" y2="1"><stop offset="0" stop-color="#f2f2f2"/><stop offset="0.5" stop-color="#e4e4e4"/><stop offset="1" stop-color="#c4c4c4"/></linearGradient><radialGradient id="glow"><stop offset="0" stop-color="#ffffe0"/><stop offset="0.25" stop-color="#f4ec20"/><stop offset="0.6" stop-color="#f2ea10" stop-opacity="0.9"/><stop offset="1" stop-color="#f2ea10" stop-opacity="0"/></radialGradient></defs><rect x="7" y="32" width="2" height="2" fill="#a2a2a2"/><rect x="7" y="38" width="2" height="2" fill="#a2a2a2"/><rect x="7" y="44" width="2" height="2" fill="#a2a2a2"/><rect x="7" y="50" width="2" height="2" fill="#a2a2a2"/><rect x="7" y="56" width="2" height="2" fill="#a2a2a2"/><rect x="87" y="32" width="2" height="2" fill="#a2a2a2"/><rect x="87" y="38" width="2" height="2" fill="#a2a2a2"/><rect x="87" y="44" width="2" height="2" fill="#a2a2a2"/><rect x="87" y="50" width="2" height="2" fill="#a2a2a2"/><rect x="87" y="56" width="2" height="2" fill="#a2a2a2"/><line x1="186.5" y1="27" x2="186.5" y2="66" stroke="#8c8c8c" stroke-width="1" stroke-dasharray="1 2"/><line x1="288.5" y1="27" x2="288.5" y2="66" stroke="#8c8c8c" stroke-width="1" stroke-dasharray="1 2"/><rect x="343.5" y="32" width="2" height="2" fill="#a2a2a2"/><rect x="343.5" y="38" width="2" height="2" fill="#a2a2a2"/><rect x="343.5" y="44" width="2" height="2" fill="#a2a2a2"/><rect x="343.5" y="50" width="2" height="2" fill="#a2a2a2"/><rect x="343.5" y="56" width="2" height="2" fill="#a2a2a2"/><rect x="402" y="32" width="2" height="2" fill="#a2a2a2"/><rect x="402" y="38" width="2" height="2" fill="#a2a2a2"/><rect x="402" y="44" width="2" height="2" fill="#a2a2a2"/><rect x="402" y="50" width="2" height="2" fill="#a2a2a2"/><rect x="402" y="56" width="2" height="2" fill="#a2a2a2"/><line x1="501.5" y1="27" x2="501.5" y2="66" stroke="#8c8c8c" stroke-width="1" stroke-dasharray="1 2"/><line x1="557.5" y1="27" x2="557.5" y2="66" stroke="#8c8c8c" stroke-width="1" stroke-dasharray="1 2"/><rect x="707" y="32" width="2" height="2" fill="#a2a2a2"/><rect x="707" y="38" width="2" height="2" fill="#a2a2a2"/><rect x="707" y="44" width="2" height="2" fill="#a2a2a2"/><rect x="707" y="50" width="2" height="2" fill="#a2a2a2"/><rect x="707" y="56" width="2" height="2" fill="#a2a2a2"/><line x1="853.5" y1="27" x2="853.5" y2="66" stroke="#8c8c8c" stroke-width="1" stroke-dasharray="1 2"/><line x1="910.5" y1="27" x2="910.5" y2="66" stroke="#8c8c8c" stroke-width="1" stroke-dasharray="1 2"/><path d="M27.5 35.5 L27.5 52 L31.5 48 L35.3 56 L37.8 55 L34.5 47.5 L38.8 46.8 Z" fill="#fff" stroke="#333" stroke-width="1" stroke-linejoin="round"/><rect x="100.5" y="32.5" width="24" height="28" rx="1" fill="#f4f4f4" stroke="#8a8a8a" stroke-width="1"/><line x1="101" y1="60.5" x2="124" y2="60.5" stroke="#777" stroke-width="1.5"/><circle cx="120.8" cy="37.7" r="7.5" fill="url(#glow)"/><path d="M144 34.5 L152 34.5 L150 58 L146 58 Z" fill="#9a9a9a" stroke="#777" stroke-width="0.8"/><path d="M150.5 32.5 L172 32.5 L169 46 L148 50 Z" fill="#f2f2f2" stroke="#888" stroke-width="0.8"/><rect x="153" y="35.5" width="16" height="2" fill="#bbb"/><rect x="152.5" y="39" width="15" height="2" fill="#c4c4c4"/><path d="M151 43.5 L174.6 43.5 L171.5 57.5 L146 57.5 Z" fill="url(#folder)" stroke="#3f6fae" stroke-width="0.8"/><rect x="202.5" y="33" width="24.5" height="25.5" rx="2.5" fill="url(#flop)" stroke="#2a2aa0" stroke-width="1"/><rect x="206.0" y="34.5" width="17.5" height="11" fill="#eef2ff"/><rect x="208.0" y="48" width="12" height="10" fill="#dcdce8"/><rect x="210.0" y="50.5" width="2" height="4.5" fill="#1b4ed8"/><rect x="248.5" y="33" width="24.5" height="25.5" rx="2.5" fill="url(#flop)" stroke="#2a2aa0" stroke-width="1"/><rect x="252.0" y="34.5" width="17.5" height="11" fill="#eef2ff"/><rect x="254.0" y="48" width="12" height="10" fill="#dcdce8"/><rect x="256.0" y="50.5" width="2" height="4.5" fill="#1b4ed8"/><path d="M258 52 L259.5 47 L273 33.5 L276 36.5 L262.5 50 Z" fill="#f5a623" stroke="#9a3010" stroke-width="0.8"/><path d="M271.5 35 L274.5 38" stroke="#d84030" stroke-width="2.2"/><rect x="305.5" y="43" width="24" height="15.5" rx="3.5" fill="#000"/><path d="M306.5 45 Q307 36 317.5 35 Q328 36 328.5 45 Z" fill="#000"/><circle cx="310.5" cy="42.7" r="3.2" fill="#000"/><circle cx="313.3" cy="39.2" r="3.2" fill="#000"/><circle cx="317.5" cy="37.9" r="3.2" fill="#000"/><circle cx="321.7" cy="39.2" r="3.2" fill="#000"/><circle cx="324.5" cy="42.7" r="3.2" fill="#000"/><line x1="317.5" y1="45.5" x2="310.5" y2="42.7" stroke="#f8a830" stroke-width="1.6"/><circle cx="310.5" cy="42.7" r="1.9" fill="#f8a830"/><line x1="317.5" y1="45.5" x2="313.3" y2="39.2" stroke="#f8a830" stroke-width="1.6"/><circle cx="313.3" cy="39.2" r="1.9" fill="#f8a830"/><line x1="317.5" y1="45.5" x2="317.5" y2="37.9" stroke="#f8a830" stroke-width="1.6"/><circle cx="317.5" cy="37.9" r="1.9" fill="#f8a830"/><line x1="317.5" y1="45.5" x2="321.7" y2="39.2" stroke="#f8a830" stroke-width="1.6"/><circle cx="321.7" cy="39.2" r="1.9" fill="#f8a830"/><line x1="317.5" y1="45.5" x2="324.5" y2="42.7" stroke="#f8a830" stroke-width="1.6"/><circle cx="324.5" cy="42.7" r="1.9" fill="#f8a830"/><rect x="307.5" y="44.6" width="20" height="1.8" fill="#f8a830"/><text x="317.5" y="56.3" font-family="Liberation Sans" font-weight="bold" font-size="11" fill="#fff" text-anchor="middle" textLength="19.5" lengthAdjust="spacingAndGlyphs">SVG</text><rect x="363.5" y="32.5" width="19" height="14" fill="#eaeaea" stroke="#a8a8a8" stroke-width="0.8"/><path d="M359.5 46 L362 42.5 L384.5 42.5 L387 46 L387 57 Q373 60 359.5 57 Z" fill="url(#prn)" stroke="#8c8c8c" stroke-width="0.9"/><ellipse cx="373" cy="58.8" rx="12" ry="1.3" fill="#aaa" opacity="0.6"/><line x1="360" y1="49" x2="386.5" y2="49" stroke="#c8c8c8" stroke-width="1"/><line x1="372" y1="45" x2="380.5" y2="52.5" stroke="#777" stroke-width="2.5" stroke-linecap="round"/><circle cx="368.5" cy="40.5" r="6" fill="#bcd3f0" stroke="#5a8ad0" stroke-width="1.2"/><path d="M418 41 Q428 30 437 36 Q444 42 440 51 Q436 58 426.5 58 Q434 55 435.5 48 Q436 41 429 40 Q424 40 422 44 L427 48.5 L413.8 48.5 L413.8 35 Z" fill="url(#green)" stroke="#15803a" stroke-width="0.9" stroke-linejoin="round"/><g opacity="0.6"><path d="M483.8 41 Q473.8 30 464.8 36 Q457.8 42 461.8 51 Q465.8 58 475.3 58 Q467.8 55 466.3 48 Q465.8 41 472.8 40 Q477.8 40 479.8 44 L474.8 48.5 L488 48.5 L488 35 Z" fill="url(#green)" stroke="#15803a" stroke-width="0.9" stroke-linejoin="round"/></g><ellipse cx="530" cy="57.5" rx="12" ry="1.5" fill="#d0d0d0"/><path d="M517.5 51 L535 34 L542 41 L524.5 57.5 Z" fill="#e89090" stroke="#c87070" stroke-width="0.8"/><path d="M517.5 51 L521.5 47 L528.5 54 L524.5 57.5 Z" fill="#f2f2f2" stroke="#aaa" stroke-width="0.6"/><path d="M525 43.5 L536 35 L540 39 L529 47.5 Z" fill="#f6c8c8"/><path d="M586.3 46.5 L587.6 31.3 L589.8 31.3 L589.3 46.5 Z" fill="#f2f2f2" stroke="#9a9a9a" stroke-width="0.7"/><path d="M588 45 L599.6 37.2 L600.8 40 L589.6 47.5 Z" fill="#f2f2f2" stroke="#9a9a9a" stroke-width="0.7"/><path d="M582 47 L588 46.5 L588.3 51" fill="none" stroke="#e07a7a" stroke-width="1.6"/><ellipse cx="577.8" cy="48" rx="4.6" ry="2.9" fill="none" stroke="#e07a7a" stroke-width="2" transform="rotate(-22 577.8 48)"/><ellipse cx="588.5" cy="55.3" rx="2.6" ry="4.2" fill="none" stroke="#e07a7a" stroke-width="2"/><path d="M574.5 55.5 v5 M572 58 h5" stroke="#333" stroke-width="1"/><path d="M617.5 31.5 L637 31.5 L637 57.5 L617.5 57.5 Z" fill="#f4f4f4" stroke="#c8c8c8" stroke-width="0.8"/><path d="M625.5 36.5 L646 36.5 L646 58 L643 61.5 L625.5 61.5 Z" fill="#f0f0f0" stroke="#a8a8a8" stroke-width="0.8"/><line x1="629" y1="40" x2="642" y2="40" stroke="#cfcfcf" stroke-width="0.8"/><line x1="629" y1="42.5" x2="642" y2="42.5" stroke="#cfcfcf" stroke-width="0.8"/><line x1="629" y1="45" x2="642" y2="45" stroke="#cfcfcf" stroke-width="0.8"/><line x1="629" y1="47.5" x2="642" y2="47.5" stroke="#cfcfcf" stroke-width="0.8"/><line x1="629" y1="50" x2="642" y2="50" stroke="#cfcfcf" stroke-width="0.8"/><path d="M621.5 56 v5 M619 58.5 h5" stroke="#333" stroke-width="1"/><rect x="665.5" y="32.5" width="25" height="27.5" rx="1.5" fill="#c8862a" stroke="#9a6418" stroke-width="0.8"/><rect x="668" y="35" width="20" height="22.5" fill="#f4f4f4"/><rect x="671.5" y="30.5" width="13" height="5" rx="1.2" fill="#9a9a96" stroke="#777" stroke-width="0.6"/><line x1="671" y1="40" x2="684" y2="40" stroke="#bbb" stroke-width="0.8"/><line x1="671" y1="42.5" x2="684" y2="42.5" stroke="#bbb" stroke-width="0.8"/><line x1="671" y1="45" x2="684" y2="45" stroke="#bbb" stroke-width="0.8"/><line x1="671" y1="47.5" x2="684" y2="47.5" stroke="#bbb" stroke-width="0.8"/><line x1="671" y1="50" x2="684" y2="50" stroke="#bbb" stroke-width="0.8"/><path d="M682 57.5 L688 51.5 L688 57.5 Z" fill="#888"/><line x1="722" y1="56.5" x2="744" y2="56.5" stroke="#ff2020" stroke-width="1"/><path d="M723 55 L724.5 50 L739.5 35.5 L743 39 L728 53.5 Z" fill="#e03a20" stroke="#7a2a10" stroke-width="0.8"/><path d="M723 55 L724.5 50 L728 53.5 Z" fill="#f0d0a0"/><path d="M737.5 37.5 L741 41" stroke="#ccc" stroke-width="2"/><rect x="765" y="35.5" width="28.5" height="21.5" fill="#00007a" stroke="#2a2a2a" stroke-width="1"/><path d="M768.5 54 L790 39.5 L790 54 Z" fill="none" stroke="#e0e0f0" stroke-width="1.1" stroke-dasharray="2.5 1.5"/><path d="M804 68 L804 29 Q804 25 808 25 L843 25 Q847 25 847 29 L847 68 Z" fill="#b5b5b5"/><circle cx="825" cy="45.5" r="13.5" fill="none" stroke="#000" stroke-width="2"/><line x1="811" y1="59.5" x2="839" y2="32" stroke="#1030ff" stroke-width="1.3"/><path d="M861 68 L861 29 Q861 25 865 25 L900 25 Q904 25 904 29 L904 68 Z" fill="#b5b5b5"/><rect x="869" y="33" width="2" height="2" fill="#111"/><rect x="869" y="41" width="2" height="2" fill="#111"/><rect x="869" y="49" width="2" height="2" fill="#111"/><rect x="869" y="57" width="2" height="2" fill="#111"/><rect x="877" y="33" width="2" height="2" fill="#111"/><rect x="877" y="41" width="2" height="2" fill="#111"/><rect x="877" y="49" width="2" height="2" fill="#111"/><rect x="877" y="57" width="2" height="2" fill="#111"/><rect x="885" y="33" width="2" height="2" fill="#111"/><rect x="885" y="41" width="2" height="2" fill="#111"/><rect x="885" y="49" width="2" height="2" fill="#111"/><rect x="885" y="57" width="2" height="2" fill="#111"/><rect x="893" y="33" width="2" height="2" fill="#111"/><rect x="893" y="41" width="2" height="2" fill="#111"/><rect x="893" y="49" width="2" height="2" fill="#111"/><rect x="893" y="57" width="2" height="2" fill="#111"/><g><line x1="942.5" y1="49" x2="950.5" y2="56" stroke="#555" stroke-width="4" stroke-linecap="round"/><line x1="942.5" y1="49" x2="950.5" y2="56" stroke="#9a9a9a" stroke-width="1.5" stroke-linecap="round"/><circle cx="935.5" cy="42" r="10.5" fill="#e6e6e0" stroke="#9c9c96" stroke-width="1"/><circle cx="935.5" cy="42" r="8" fill="url(#lensg)" stroke="#3f6fb0" stroke-width="0.8"/><path d="M930.5 42 h10 M935.5 37 v10" stroke="#fff" stroke-width="2.8"/></g><g><line x1="988.5" y1="49" x2="996.5" y2="56" stroke="#555" stroke-width="4" stroke-linecap="round"/><line x1="988.5" y1="49" x2="996.5" y2="56" stroke="#9a9a9a" stroke-width="1.5" stroke-linecap="round"/><circle cx="981.5" cy="42" r="10.5" fill="#e6e6e0" stroke="#9c9c96" stroke-width="1"/><circle cx="981.5" cy="42" r="8" fill="url(#lensg)" stroke="#3f6fb0" stroke-width="0.8"/><path d="M976.5 42 h10" stroke="#fff" stroke-width="2.8"/></g><g><line x1="1034.7" y1="49" x2="1042.7" y2="56" stroke="#555" stroke-width="4" stroke-linecap="round"/><line x1="1034.7" y1="49" x2="1042.7" y2="56" stroke="#9a9a9a" stroke-width="1.5" stroke-linecap="round"/><circle cx="1027.7" cy="42" r="10.5" fill="#e6e6e0" stroke="#9c9c96" stroke-width="1"/><circle cx="1027.7" cy="42" r="8" fill="url(#lensg)" stroke="#3f6fb0" stroke-width="0.8"/><path d="M1022.7 40 v-3 h3 M1029.7 37 h3 v3 M1032.7 44 v3 h-3 M1025.7 47 h-3 v-3" stroke="#fff" stroke-width="1.6" fill="none"/></g><g opacity="0.55"><line x1="1080.9" y1="49" x2="1088.9" y2="56" stroke="#555" stroke-width="4" stroke-linecap="round"/><line x1="1080.9" y1="49" x2="1088.9" y2="56" stroke="#9a9a9a" stroke-width="1.5" stroke-linecap="round"/><circle cx="1073.9" cy="42" r="10.5" fill="#e6e6e0" stroke="#9c9c96" stroke-width="1"/><circle cx="1073.9" cy="42" r="8" fill="url(#lensg)" stroke="#3f6fb0" stroke-width="0.8"/><path d="M1068.9 40 v-3 h3 M1075.9 37 h3 v3 M1078.9 44 v3 h-3 M1071.9 47 h-3 v-3" stroke="#e04040" stroke-width="1.6" fill="none"/></g><g><line x1="1126.7" y1="49" x2="1134.7" y2="56" stroke="#555" stroke-width="4" stroke-linecap="round"/><line x1="1126.7" y1="49" x2="1134.7" y2="56" stroke="#9a9a9a" stroke-width="1.5" stroke-linecap="round"/><circle cx="1119.7" cy="42" r="10.5" fill="#e6e6e0" stroke="#9c9c96" stroke-width="1"/><circle cx="1119.7" cy="42" r="8" fill="url(#lensg)" stroke="#3f6fb0" stroke-width="0.8"/><path d="M1113.7 42 L1118.7 37.5 L1118.7 40 L1124.7 40 L1124.7 44 L1118.7 44 L1118.7 46.5 Z" fill="#fff"/></g><rect x="1153.5" y="30.5" width="27" height="16.5" fill="#fff" stroke="#5a8ad0" stroke-width="1"/><g><line x1="1174" y1="52.5" x2="1182" y2="59.5" stroke="#555" stroke-width="4" stroke-linecap="round"/><line x1="1174" y1="52.5" x2="1182" y2="59.5" stroke="#9a9a9a" stroke-width="1.5" stroke-linecap="round"/><circle cx="1167" cy="45.5" r="10.5" fill="#e6e6e0" stroke="#9c9c96" stroke-width="1"/><circle cx="1167" cy="45.5" r="8" fill="url(#lensg)" stroke="#3f6fb0" stroke-width="0.8"/></g><g><line x1="1218.4" y1="49" x2="1226.4" y2="56" stroke="#555" stroke-width="4" stroke-linecap="round"/><line x1="1218.4" y1="49" x2="1226.4" y2="56" stroke="#9a9a9a" stroke-width="1.5" stroke-linecap="round"/><circle cx="1211.4" cy="42" r="10.5" fill="#e6e6e0" stroke="#9c9c96" stroke-width="1"/><circle cx="1211.4" cy="42" r="8" fill="url(#lensg)" stroke="#3f6fb0" stroke-width="0.8"/></g><path d="M1211.4 32 v20 M1201.4 42 h20" stroke="#fff" stroke-width="2.2"/><path d="M1211.4 30 l-3 3.5 h6 Z M1211.4 54 l-3 -3.5 h6 Z M1199.4 42 l3.5 -3 v6 Z M1223.4 42 l-3.5 -3 v6 Z" fill="#fff" stroke="#3f6fb0" stroke-width="0.6"/><rect x="7" y="77" width="2" height="2" fill="#a2a2a2"/><rect x="7" y="83" width="2" height="2" fill="#a2a2a2"/><rect x="7" y="89" width="2" height="2" fill="#a2a2a2"/><rect x="7" y="95" width="2" height="2" fill="#a2a2a2"/><rect x="15.5" y="73.3" width="43" height="31" rx="5" fill="url(#btng)" stroke="#8c8c8c" stroke-width="2"/><line x1="24.8" y1="88.7" x2="42.7" y2="79.3" stroke="#ff2a2a" stroke-width="1.2"/><line x1="29.3" y1="97.3" x2="47.5" y2="88.2" stroke="#222" stroke-width="1.2"/><line x1="30.5" y1="86.3" x2="34.5" y2="94.3" stroke="#4040ff" stroke-width="1"/><line x1="68.5" y1="70" x2="68.5" y2="106" stroke="#8c8c8c" stroke-width="1" stroke-dasharray="1 2"/><rect x="151" y="78.5" width="75" height="20.5" fill="#ffd9d9"/><path d="M142 78.5 H234 M142 99 H234 M151 69 V107 M226 69 V107" stroke="#f0a0a0" stroke-width="1.2"/><path d="M151 78.5 H226 M151 99 H226 M151 78.5 V99 M226 78.5 V99" stroke="#e46262" stroke-width="1.2"/><line x1="232.5" y1="70" x2="232.5" y2="106" stroke="#8c8c8c" stroke-width="1" stroke-dasharray="1 2"/><rect x="308" y="80" width="60" height="16.3" fill="#fff"/><line x1="308" y1="96.5" x2="368" y2="96.5" stroke="#c0c0c0" stroke-width="0.8"/><rect x="370.8" y="78" width="12.2" height="19.7" rx="4" fill="#fff" stroke="#dedede" stroke-width="0.6"/><path d="M373.8 85 L377 81.8 L380.2 85 M373.8 91 L377 94.2 L380.2 91" fill="none" stroke="#222" stroke-width="1.2"/><line x1="391.5" y1="70" x2="391.5" y2="106" stroke="#8c8c8c" stroke-width="1" stroke-dasharray="1 2"/><rect x="521" y="70" width="43" height="36.7" rx="4.5" fill="#b5b5b5"/><path d="M531.5 99 V84.5 H538.7 V77.5 H553.5 V99" fill="none" stroke="#ff1a1a" stroke-width="1.3"/><path d="M535.3 99 V88.5 H542.3 V81.5 H549.5 V99" fill="none" stroke="#111" stroke-width="1.3"/><path d="M581 99.5 V88 H589 V80 H597 V99.5" fill="none" stroke="#5a5a5a" stroke-width="2"/><line x1="589" y1="80" x2="597" y2="80" stroke="#4a4aff" stroke-width="2"/><line x1="589" y1="76" x2="597" y2="76" stroke="#f06060" stroke-width="2"/><line x1="617.5" y1="70" x2="617.5" y2="106" stroke="#8c8c8c" stroke-width="1" stroke-dasharray="1 2"/><rect x="742.3" y="70" width="42.5" height="36.7" rx="4.5" fill="#b5b5b5"/><path d="M756.3 99.3 V88 Q756.3 81.3 763 81.3 H774" fill="none" stroke="#ff1a1a" stroke-width="1.3"/><path d="M763.4 99.3 V88.4 H774" fill="none" stroke="#111" stroke-width="1.3"/><path d="M802 99.5 V80 H822" fill="none" stroke="#f05858" stroke-width="2"/><path d="M810 99.5 V88 H822" fill="none" stroke="#555" stroke-width="2"/><line x1="837.5" y1="70" x2="837.5" y2="106" stroke="#8c8c8c" stroke-width="1" stroke-dasharray="1 2"/><rect x="853" y="82" width="12" height="12" rx="3" fill="#fff" stroke="#d4d4d4" stroke-width="0.6"/><path d="M855.5 88 L858.3 91.3 L862.8 84.3" fill="none" stroke="#111" stroke-width="1.8"/><line x1="961.5" y1="70" x2="961.5" y2="106" stroke="#8c8c8c" stroke-width="1" stroke-dasharray="1 2"/><clipPath id="lclip"><rect x="0" y="100" width="72" height="698"/></clipPath><g clip-path="url(#lclip)"><defs><linearGradient id="lbtn" x1="0" y1="0" x2="0" y2="1"><stop offset="0" stop-color="#e4e4e4"/><stop offset="0.35" stop-color="#f4f4f4"/><stop offset="1" stop-color="#f2f2f2"/></linearGradient></defs><rect x="6" y="116" width="2" height="2" fill="#a8a8a8"/><rect x="12" y="116" width="2" height="2" fill="#a8a8a8"/><rect x="18" y="116" width="2" height="2" fill="#a8a8a8"/><rect x="24" y="116" width="2" height="2" fill="#a8a8a8"/><rect x="30" y="116" width="2" height="2" fill="#a8a8a8"/><rect x="36" y="116" width="2" height="2" fill="#a8a8a8"/><rect x="42" y="116" width="2" height="2" fill="#a8a8a8"/><rect x="48" y="116" width="2" height="2" fill="#a8a8a8"/><rect x="54" y="116" width="2" height="2" fill="#a8a8a8"/><rect x="60" y="116" width="2" height="2" fill="#a8a8a8"/><rect x="1.5" y="120.5" width="69" height="25" fill="url(#lbtn)" stroke="#8c8c8c" stroke-width="1"/><path d="M31.5 133 L39.5 128 L39.5 138 Z" fill="#000"/><rect x="1.5" y="156.8" width="33.8" height="33.5" fill="url(#lbtn)" stroke="#8a8a8a" stroke-width="1.2"/><rect x="36.3" y="156.8" width="33.7" height="33.5" fill="url(#lbtn)" stroke="#8a8a8a" stroke-width="1.2"/><rect x="1.5" y="191.3" width="33.8" height="33.69999999999999" fill="url(#lbtn)" stroke="#8a8a8a" stroke-width="1.2"/><rect x="36.3" y="191.3" width="33.7" height="33.69999999999999" fill="url(#lbtn)" stroke="#8a8a8a" stroke-width="1.2"/><rect x="1.5" y="226.0" width="33.8" height="33.80000000000001" fill="url(#lbtn)" stroke="#8a8a8a" stroke-width="1.2"/><rect x="36.3" y="226.0" width="33.7" height="33.80000000000001" fill="url(#lbtn)" stroke="#8a8a8a" stroke-width="1.2"/><rect x="1.5" y="260.8" width="33.8" height="34.0" fill="url(#lbtn)" stroke="#8a8a8a" stroke-width="1.2"/><rect x="1.5" y="304.5" width="33.8" height="33.69999999999999" rx="5" fill="#b9b9b9" stroke="#8e8e8e" stroke-width="1"/><rect x="36.3" y="304.5" width="33.7" height="33.69999999999999" fill="url(#lbtn)" stroke="#8a8a8a" stroke-width="1.2"/><rect x="1.5" y="347.9" width="33.8" height="33.60000000000002" fill="url(#lbtn)" stroke="#8a8a8a" stroke-width="1.2"/><rect x="36.3" y="347.9" width="33.7" height="33.60000000000002" fill="url(#lbtn)" stroke="#8a8a8a" stroke-width="1.2"/><rect x="1.5" y="382.5" width="33.8" height="33.5" fill="url(#lbtn)" stroke="#8a8a8a" stroke-width="1.2"/><rect x="36.3" y="382.5" width="33.7" height="33.5" fill="url(#lbtn)" stroke="#8a8a8a" stroke-width="1.2"/><rect x="1.5" y="417.0" width="33.8" height="34.19999999999999" fill="url(#lbtn)" stroke="#8a8a8a" stroke-width="1.2"/><rect x="1.5" y="460.9" width="33.8" height="33.10000000000002" fill="url(#lbtn)" stroke="#8a8a8a" stroke-width="1.2"/><rect x="36.3" y="460.9" width="33.7" height="33.10000000000002" fill="url(#lbtn)" stroke="#8a8a8a" stroke-width="1.2"/><rect x="1.5" y="504.0" width="33.8" height="32.700000000000045" fill="url(#lbtn)" stroke="#8a8a8a" stroke-width="1.2"/><rect x="36.3" y="504.0" width="33.7" height="32.700000000000045" fill="url(#lbtn)" stroke="#8a8a8a" stroke-width="1.2"/><rect x="1.5" y="537.7" width="33.8" height="34.09999999999991" fill="url(#lbtn)" stroke="#8a8a8a" stroke-width="1.2"/><rect x="36.3" y="537.7" width="33.7" height="34.09999999999991" fill="url(#lbtn)" stroke="#8a8a8a" stroke-width="1.2"/><rect x="1.5" y="572.8" width="33.8" height="34.0" fill="url(#lbtn)" stroke="#8a8a8a" stroke-width="1.2"/><rect x="36.3" y="572.8" width="33.7" height="34.0" fill="url(#lbtn)" stroke="#8a8a8a" stroke-width="1.2"/><rect x="1.5" y="617.1" width="33.8" height="32.89999999999998" fill="url(#lbtn)" stroke="#8a8a8a" stroke-width="1.2"/><rect x="36.3" y="617.1" width="33.7" height="32.89999999999998" fill="url(#lbtn)" stroke="#8a8a8a" stroke-width="1.2"/><rect x="1.5" y="651.0" width="33.8" height="33.799999999999955" fill="url(#lbtn)" stroke="#8a8a8a" stroke-width="1.2"/><rect x="1.5" y="694.5" width="33.8" height="33.700000000000045" fill="url(#lbtn)" stroke="#8a8a8a" stroke-width="1.2"/><rect x="1.5" y="737.9" width="33.8" height="32.60000000000002" fill="url(#lbtn)" stroke="#8a8a8a" stroke-width="1.2"/><rect x="36.3" y="737.9" width="33.7" height="32.60000000000002" fill="url(#lbtn)" stroke="#8a8a8a" stroke-width="1.2"/><rect x="1.5" y="780.5" width="33.8" height="33" fill="url(#lbtn)" stroke="#8a8a8a" stroke-width="1.2"/><path d="M7 162.5 V183.5 H15 Z" fill="none" stroke="#555" stroke-width="1"/><path d="M22 162.5 V183.5 H30 Z" fill="none" stroke="#f06060" stroke-width="1"/><path d="M10.5 172 H19 V170 L23 173.5 L19 177 V175 H10.5 Z" fill="#fff" stroke="#6a6aff" stroke-width="0.8"/><path d="M42 172 V183.7 H50 Z" fill="none" stroke="#555" stroke-width="1"/><path d="M51.5 169.5 L63.5 161 V169.5 Z" fill="none" stroke="#f06060" stroke-width="1"/><path d="M51.5 181.5 Q59 180 60 173 L57.5 173 L58.5 168.5 L62 173 L60 173" fill="none" stroke="#6a6aff" stroke-width="1.6" stroke-dasharray="1.5 0.6"/><path d="M7 198 V219 H15 Z" fill="none" stroke="#555" stroke-width="1"/><path d="M23.5 201.5 V214.5 H29 Z" fill="none" stroke="#f06060" stroke-width="1"/><path d="M11.5 207.5 H19 V205.5 L23 209 L19 212.5 V210.5 H11.5 Z" fill="#fff" stroke="#6a6aff" stroke-width="0.8"/><path d="M40.5 204 L61 195 L46 210 Z" fill="none" stroke="#555" stroke-width="1"/><line x1="47" y1="214" x2="64" y2="197" stroke="#6a6aff" stroke-width="1" stroke-dasharray="1.5 1.5"/><path d="M51.5 215.5 L66 200 L57 220.5 Z" fill="none" stroke="#f06060" stroke-width="1"/><path d="M6.5 235.5 h7.5 v-1.8 l3.2 3 l-3.2 3 v-1.8 h-7.5 Z" fill="#fff" stroke="#6a6aff" stroke-width="0.8"/><path d="M27.5 237.5 A4.2 4.2 0 1 1 25.5 233.5" fill="none" stroke="#6a6aff" stroke-width="1.5" stroke-dasharray="1.5 0.7"/><path d="M24.5 231 L28 234 L24 235.5 Z" fill="#fff" stroke="#6a6aff" stroke-width="0.7"/><path d="M7 242 V254 H15 Z" fill="none" stroke="#555" stroke-width="1"/><path d="M18 252 L30 243.5 V252 Z" fill="none" stroke="#f06060" stroke-width="1"/><path d="M42 242 V253.5 H50 Z" fill="none" stroke="#555" stroke-width="1"/><path d="M56 231 V242.5 H64 Z" fill="none" stroke="#f06060" stroke-width="1"/><path d="M52 252 Q59 250 59.5 244.5" fill="none" stroke="#6a6aff" stroke-width="1.8" stroke-dasharray="1.5 0.6"/><path d="M20 267.5 H8.5 V278.5 L20 267.5" fill="none" stroke="#555" stroke-width="0.9"/><path d="M20 267.5 L28.5 282 M8.5 278.5 L16.5 282" fill="none" stroke="#7070ff" stroke-width="0.8"/><path d="M16.5 282 L22.5 275.5 L28.5 282 Z" fill="none" stroke="#f06060" stroke-width="1.2"/><path d="M16.5 282.5 V290 M28.5 282.5 V290" stroke="#555" stroke-width="1"/><line x1="8.3" y1="322" x2="24.7" y2="313.7" stroke="#ff2020" stroke-width="1.1"/><line x1="12.3" y1="330" x2="28.3" y2="321.3" stroke="#111" stroke-width="1.1"/><line x1="13.5" y1="319.5" x2="17.5" y2="327.5" stroke="#4040ff" stroke-width="0.9"/><line x1="41.5" y1="321.5" x2="59.8" y2="312.2" stroke="#ff2020" stroke-width="1.1"/><line x1="46.2" y1="330.5" x2="64" y2="321" stroke="#111" stroke-width="1.1"/><circle cx="51.6" cy="327.5" r="1.9" fill="#ff0000"/><line x1="6" y1="353" x2="29.5" y2="364.5" stroke="#111" stroke-width="1"/><line x1="6" y1="375" x2="12" y2="366" stroke="#111" stroke-width="1"/><line x1="12" y1="366" x2="17" y2="358" stroke="#ff2020" stroke-width="1"/><path d="M14 373.5 L18 366.5 L16.5 365.5 L21 362.5 L21 368 L19.5 367.3 L15.5 374.5 Z" fill="#fff" stroke="#6a6aff" stroke-width="0.8"/><path d="M42.5 353.5 L54 357.5 M56 366 L42.5 375" stroke="#111" stroke-width="1" fill="none"/><path d="M54 357.5 L63.5 361 L56 366" stroke="#ff2020" stroke-width="1" fill="none"/><path d="M52 352 h6 v-1.5 l4 3 l-4 3 v-1.5 h-6 Z M52.5 373 l5 -4.5 l-1 -1 l5 -1.5 l-1 5 l-1 -1 l-5 4.5 Z" fill="#fff" stroke="#6a6aff" stroke-width="0.8"/><line x1="22.5" y1="388" x2="13" y2="402" stroke="#111" stroke-width="1"/><line x1="13" y1="402" x2="8" y2="409.5" stroke="#ff2020" stroke-width="1"/><path d="M17 405 L21 399 L19.5 398 L24 396 L23.5 401 L22 400 L18.5 406 Z" fill="#fff" stroke="#6a6aff" stroke-width="0.8"/><text x="26" y="406" font-size="7" font-family="Liberation Sans" fill="#222">x</text><path d="M54 391 H44 Q42 391 42 394 V400 Q42 407 49 407 H54 V401 H47.5 V397 H54 Z" fill="none" stroke="#222" stroke-width="1"/><path d="M54 391 H63.5 V395.5 H54 M54 400 H63.5 V407 H54" fill="none" stroke="#ff2020" stroke-width="1"/><path d="M49 401.5 h8 v-1.5 l3.5 2.8 l-3.5 2.8 v-1.5 h-8 Z" fill="#fff" stroke="#6a6aff" stroke-width="0.8"/><path d="M4 435 L30 420 M13 421 L31 443 M8 443 L28 428" stroke="#f4a0a0" stroke-width="0.7" fill="none"/><rect x="11" y="428" width="14" height="11" fill="none" stroke="#6060ff" stroke-width="1"/><path d="M12 432 Q20 429 21 438" fill="none" stroke="#333" stroke-width="0.9"/><path d="M8 468 H16.5" stroke="#111" stroke-width="1"/><path d="M16.5 468 L26 478.5" stroke="#ff2020" stroke-width="1"/><path d="M26 478.5 V486" stroke="#111" stroke-width="1"/><path d="M43 468 H51" stroke="#111" stroke-width="1"/><path d="M51 468 Q61.5 468 61.5 478.5" fill="none" stroke="#ff2020" stroke-width="1"/><path d="M61.5 478.5 V486" stroke="#111" stroke-width="1"/><circle cx="51.5" cy="478.5" r="0.9" fill="#2020ff"/><g opacity="1"><line x1="5" y1="528" x2="21" y2="508" stroke="#111" stroke-width="1"/><path d="M8 518 L21 520 L21 523 L9 521 Z" fill="#eee" stroke="#777" stroke-width="0.6"/><path d="M14 510 L18 508 L20 520 L17 520 Z" fill="#eee" stroke="#777" stroke-width="0.6"/><ellipse cx="27" cy="519.5" rx="4" ry="2.5" fill="none" stroke="#c02020" stroke-width="2"/><ellipse cx="20.5" cy="528" rx="2.2" ry="3.8" fill="none" stroke="#c02020" stroke-width="2"/><circle cx="14" cy="515" r="1.8" fill="#ff1010"/></g><g opacity="0.5"><line x1="40" y1="528" x2="56" y2="508" stroke="#111" stroke-width="1"/><path d="M43 518 L56 520 L56 523 L44 521 Z" fill="#eee" stroke="#777" stroke-width="0.6"/><path d="M49 510 L53 508 L55 520 L52 520 Z" fill="#eee" stroke="#777" stroke-width="0.6"/><ellipse cx="62" cy="519.5" rx="4" ry="2.5" fill="none" stroke="#c02020" stroke-width="2"/><ellipse cx="55.5" cy="528" rx="2.2" ry="3.8" fill="none" stroke="#c02020" stroke-width="2"/><circle cx="49" cy="515" r="1.8" fill="#ff1010"/></g><path d="M12.5 544.5 V565 M23.5 544.5 V565 M6 554.5 H30" stroke="#111" stroke-width="1.2"/><circle cx="12.5" cy="554.5" r="1.9" fill="#ff0000"/><circle cx="23.5" cy="554.5" r="1.9" fill="#ff0000"/><path d="M44.5 544.5 V565 M55.5 544.5 V565 M55.5 551.5 H63 M55.5 558.5 H63" stroke="#111" stroke-width="1.2"/><path d="M44.5 551.5 H55.5 M44.5 558.5 H55.5" stroke="#aaa" stroke-width="0.6" stroke-dasharray="1 1"/><circle cx="55.5" cy="551.5" r="1.9" fill="#ff0000"/><circle cx="55.5" cy="558.5" r="1.9" fill="#ff0000"/><path d="M12.5 579.5 V600 M23.5 579.5 V600 M12.5 589.5 H23.5" stroke="#111" stroke-width="1.2"/><path d="M7.5 589.5 h3 M25.5 589.5 h3 M7.5 588 v3 M28.5 588 v3" stroke="#6060ff" stroke-width="0.7"/><circle cx="12.5" cy="589.5" r="1.9" fill="#ff0000"/><circle cx="23.5" cy="589.5" r="1.9" fill="#ff0000"/><path d="M42 601 L64 579.5" stroke="#111" stroke-width="1.2"/><circle cx="52.5" cy="590" r="2.2" fill="#ff0000"/><rect x="7.5" y="626.5" width="22" height="13" fill="#fff" stroke="#222" stroke-width="1"/><text x="9" y="637.5" font-size="11" font-family="Liberation Serif" fill="#111">A</text><line x1="19.5" y1="629" x2="19.5" y2="638" stroke="#111" stroke-width="0.9"/><rect x="40.5" y="626.5" width="25" height="13" fill="#fff" stroke="#222" stroke-width="1"/><line x1="53" y1="627" x2="53" y2="639" stroke="#222" stroke-width="0.8"/><circle cx="46" cy="633" r="2.5" fill="none" stroke="#222" stroke-width="0.9"/><path d="M42 633 h8 M46 629 v8" stroke="#222" stroke-width="0.8"/><text x="55" y="637.5" font-size="8" font-family="Liberation Sans" fill="#111">.1</text><path d="M48 634 L60 621 L62 623 L50 636 Z" fill="#f5a623" stroke="#8a3a10" stroke-width="0.6"/><path d="M8.5 671 L13 664 H26.5 V678.5 H8.5 Z" fill="#e8e8e8" stroke="#333" stroke-width="0.9"/><path d="M10 678 L20 666 M14 678 L25 665 M19 678 L26 670 M9 674 L14 667" stroke="#555" stroke-width="0.6"/><circle cx="19" cy="673" r="2.8" fill="#fff" stroke="#222" stroke-width="0.9"/><path d="M19 671 L27 662 L29 664 L21 673 Z" fill="#f5a623" stroke="#8a3a10" stroke-width="0.6"/><circle cx="8.5" cy="703.5" r="2.8" fill="#f2e060"/><path d="M5 700 l7 7 M12 700 l-7 7 M8.5 698.5 v10 M3.5 703.5 h10" stroke="#f2d040" stroke-width="0.6"/><path d="M9.5 703 Q13 696 18 699" fill="none" stroke="#666" stroke-width="0.8"/><path d="M16.5 702.5 L20.5 700 L29.5 716 L25 719 Z" fill="#d85a5a" stroke="#a03030" stroke-width="0.6"/><g opacity="1"><rect x="6" y="754" width="6" height="6" fill="#a0a0a0" stroke="#777" stroke-width="0.5"/><rect x="21" y="743" width="6" height="6" fill="#a0a0a0" stroke="#777" stroke-width="0.5"/><rect x="10" y="747" width="14" height="9" fill="#f8f3dc" stroke="#888" stroke-width="0.6"/></g><g opacity="0.85"><rect x="41.5" y="754" width="6" height="6" fill="#a0a0a0" stroke="#777" stroke-width="0.5"/><rect x="56.5" y="743" width="6" height="6" fill="#a0a0a0" stroke="#777" stroke-width="0.5"/><rect x="45.5" y="747" width="14" height="9" fill="#f8f3dc" stroke="#888" stroke-width="0.6"/></g><rect x="9" y="785" width="17" height="6" rx="1.5" fill="#f4d35e" stroke="#c0a020" stroke-width="0.6"/><path d="M26 788 h2 v6 h-12 v4" fill="none" stroke="#888" stroke-width="0.8"/></g><circle cx="102.1" cy="118.4" r="5.5" fill="#f4f4f4" stroke="#2d4590" stroke-width="2.2"/><path d="M99 116 h3 M100 121 h4" stroke="#d08080" stroke-width="0.6"/><line x1="103" y1="119.5" x2="107.3" y2="124" stroke="#f0a020" stroke-width="2"/><line x1="106" y1="122.7" x2="107.5" y2="124.2" stroke="#e06060" stroke-width="2"/><circle cx="1164.1" cy="118" r="7" fill="#6b6b6b"/><path d="M1161 115 L1167.2 121 M1167.2 115 L1161 121" stroke="#fff" stroke-width="1.6"/><circle cx="1182.1" cy="118" r="7" fill="#6b6b6b"/><rect x="1180.3" y="114.6" width="5" height="4" fill="none" stroke="#fff" stroke-width="1"/><rect x="1178.5" y="117" width="5" height="4" fill="#6b6b6b" stroke="#fff" stroke-width="1"/><rect x="1213.8" y="131" width="2" height="25" fill="#b8b8b8"/><rect x="1273.8" y="131" width="2" height="25" fill="#b8b8b8"/><rect x="1333.9" y="131" width="2" height="25" fill="#b8b8b8"/><rect x="1393.9" y="131" width="2" height="25" fill="#b8b8b8"/><g transform="translate(1184.9 142.7) scale(1.0)"><path d="M-7.5 0 Q0 -8.5 7.5 0 Q0 8.5 -7.5 0 Z" fill="#000"/><path d="M-5.2 0.3 Q0 -5.5 5.2 0.3 Q0 5.5 -5.2 0.3 Z" fill="#fff"/><circle cx="0" cy="0.2" r="2.9" fill="#000"/><path d="M-7.6 -1.8 L-6 -0.5 M7.6 -1.8 L6 -0.5" stroke="#000" stroke-width="1"/></g><g transform="translate(1244.9 142.7) scale(1.0)"><path d="M-7.5 0 Q0 -8.5 7.5 0 Q0 8.5 -7.5 0 Z" fill="#a8a8a8"/><path d="M-5.2 0.3 Q0 -5.5 5.2 0.3 Q0 5.5 -5.2 0.3 Z" fill="#fff"/><circle cx="0" cy="0.2" r="2.9" fill="#a8a8a8"/><path d="M-7.6 -1.8 L-6 -0.5 M7.6 -1.8 L6 -0.5" stroke="#a8a8a8" stroke-width="1"/></g><path d="M1299.5 142.7 h11 M1305 137.2 v11" stroke="#e00000" stroke-width="2.6"/><path d="M1359 142.7 h12" stroke="#e00000" stroke-width="2.6"/><line x1="1418.5" y1="149.5" x2="1431.5" y2="136.5" stroke="#8a5a10" stroke-width="3.6" stroke-linecap="butt"/><line x1="1418.5" y1="149.5" x2="1431.5" y2="136.5" stroke="#f0b030" stroke-width="2.4"/><line x1="1429.94" y1="138.06" x2="1431.5" y2="136.5" stroke="#e02020" stroke-width="3"/><rect x="1161.6" y="163.6" width="15.2" height="7.8" fill="#fff" stroke="#000" stroke-width="1.2"/><rect x="1161.6" y="183.3" width="15.2" height="7.8" fill="#f00" stroke="#000" stroke-width="1.2"/><g transform="translate(1422.7 166.7) scale(1.0)"><path d="M-7.5 0 Q0 -8.5 7.5 0 Q0 8.5 -7.5 0 Z" fill="#000"/><path d="M-5.2 0.3 Q0 -5.5 5.2 0.3 Q0 5.5 -5.2 0.3 Z" fill="#fff"/><circle cx="0" cy="0.2" r="2.9" fill="#000"/><path d="M-7.6 -1.8 L-6 -0.5 M7.6 -1.8 L6 -0.5" stroke="#000" stroke-width="1"/></g><g transform="translate(1422.7 186.7) scale(1.0)"><path d="M-7.5 0 Q0 -8.5 7.5 0 Q0 8.5 -7.5 0 Z" fill="#000"/><path d="M-5.2 0.3 Q0 -5.5 5.2 0.3 Q0 5.5 -5.2 0.3 Z" fill="#fff"/><circle cx="0" cy="0.2" r="2.9" fill="#000"/><path d="M-7.6 -1.8 L-6 -0.5 M7.6 -1.8 L6 -0.5" stroke="#000" stroke-width="1"/></g><path d="M1441.2 166.5 V163.5 Q1441.2 159.5 1444.7 159.5 Q1448.2 159.5 1448.2 163.5 V166.5" fill="none" stroke="#c4c4c4" stroke-width="1.5"/><rect x="1439.7" y="166.0" width="10" height="7.5" fill="#bdbdbd"/><path d="M1441.2 186.5 V183.5 Q1441.2 179.5 1444.7 179.5 Q1448.2 179.5 1448.2 183.5 V186.5" fill="none" stroke="#c4c4c4" stroke-width="1.5"/><rect x="1439.7" y="186.0" width="10" height="7.5" fill="#bdbdbd"/><line x1="1395" y1="193.5" x2="1407" y2="181.5" stroke="#8a5a10" stroke-width="3.6" stroke-linecap="butt"/><line x1="1395" y1="193.5" x2="1407" y2="181.5" stroke="#f0b030" stroke-width="2.4"/><line x1="1405.56" y1="182.94" x2="1407" y2="181.5" stroke="#e02020" stroke-width="3"/><rect x="1461.2" y="116" width="1.6" height="1.6" fill="#a0a0a0"/><rect x="1467.2" y="116" width="1.6" height="1.6" fill="#a0a0a0"/><rect x="1473.2" y="116" width="1.6" height="1.6" fill="#a0a0a0"/><rect x="1479.2" y="116" width="1.6" height="1.6" fill="#a0a0a0"/><rect x="1485.2" y="116" width="1.6" height="1.6" fill="#a0a0a0"/><rect x="1456" y="120.2" width="43" height="41.7" rx="5" fill="#b8b8b8"/><rect x="1456" y="417.3" width="43" height="42.3" rx="5" fill="#b8b8b8"/><line x1="1457" y1="261.5" x2="1499" y2="261.5" stroke="#888" stroke-width="1" stroke-dasharray="1 2.2"/><line x1="1457" y1="409.5" x2="1499" y2="409.5" stroke="#888" stroke-width="1" stroke-dasharray="1 2.2"/><rect x="1463.5" y="127.9" width="27" height="27" fill="#fff" stroke="#333" stroke-width="1"/><rect x="1463" y="127.4" width="28" height="4.5" fill="#000"/><rect x="1464.2" y="128.4" width="3" height="3" fill="#fff"/><path d="M1471 136 L1479 133 V147 L1471 150 Z" fill="#eee" stroke="#555" stroke-width="0.7"/><path d="M1474 135 L1483 132 V146 L1474 149 Z" fill="#fff" stroke="#555" stroke-width="0.7"/><path d="M1476 145 L1480 138 L1481 145 Z" fill="none" stroke="#f04040" stroke-width="0.8"/><rect x="1463.5" y="174.7" width="27" height="27" fill="#fff" stroke="#333" stroke-width="1"/><rect x="1463" y="174.2" width="28" height="4.5" fill="#000"/><rect x="1464.2" y="175.2" width="3" height="3" fill="#fff"/><rect x="1470" y="182" width="11" height="9" fill="#f4eec8" stroke="#777" stroke-width="0.7"/><circle cx="1478" cy="191.5" r="5" fill="#f4eec8" fill-opacity="0.8" stroke="#777" stroke-width="0.7"/><rect x="1463.5" y="220.2" width="27" height="27" fill="#fff" stroke="#333" stroke-width="1"/><rect x="1463" y="219.7" width="28" height="4.5" fill="#000"/><rect x="1464.2" y="220.7" width="3" height="3" fill="#fff"/><rect x="1469" y="228" width="16" height="12" rx="2.5" fill="#f2f2f2" stroke="#c8d4e8" stroke-width="0.8"/><rect x="1463.5" y="276.3" width="27" height="27" fill="#fff" stroke="#333" stroke-width="1"/><rect x="1463" y="275.8" width="28" height="4.5" fill="#000"/><rect x="1464.2" y="276.8" width="3" height="3" fill="#fff"/><rect x="1467" y="283.0" width="3" height="3" fill="#000"/><rect x="1472.5" y="283.0" width="14" height="3" fill="#fff" stroke="#000" stroke-width="0.7"/><rect x="1467" y="288.5" width="3" height="3" fill="#000"/><rect x="1472.5" y="288.5" width="14" height="3" fill="#fff" stroke="#000" stroke-width="0.7"/><rect x="1467" y="294.0" width="3" height="3" fill="#000"/><rect x="1472.5" y="294.0" width="14" height="3" fill="#fff" stroke="#000" stroke-width="0.7"/><rect x="1467" y="299.5" width="3" height="3" fill="#000"/><rect x="1472.5" y="299.5" width="14" height="3" fill="#fff" stroke="#000" stroke-width="0.7"/><rect x="1463.5" y="322.7" width="27" height="27" fill="#fff" stroke="#333" stroke-width="1"/><rect x="1463" y="322.2" width="28" height="4.5" fill="#000"/><rect x="1464.2" y="323.2" width="3" height="3" fill="#fff"/><path d="M1469.5 332 Q1477 328 1484.5 332 L1478.5 339 V347 L1476 345 V339 Z" fill="#6a6a6a"/><ellipse cx="1477" cy="332" rx="7" ry="1.5" fill="#999"/><rect x="1463.5" y="368.8" width="27" height="27" fill="#fff" stroke="#333" stroke-width="1"/><rect x="1463" y="368.3" width="28" height="4.5" fill="#000"/><rect x="1464.2" y="369.3" width="3" height="3" fill="#fff"/><path d="M1469 373.5 L1476 379 V388 L1469 392.5 Z" fill="#fff" stroke="#333" stroke-width="0.8"/><rect x="1476" y="379" width="8" height="9" rx="1.5" fill="#888"/><line x1="1467" y1="383.5" x2="1487" y2="383.5" stroke="#f08080" stroke-width="0.7" stroke-dasharray="1.5 1"/><rect x="1463.5" y="424.5" width="27" height="27" fill="#fff" stroke="#333" stroke-width="1"/><rect x="1463" y="424" width="28" height="4.5" fill="#000"/><rect x="1464.2" y="425" width="3" height="3" fill="#fff"/><path d="M1466 433 h12 M1466 436 h10 M1466 439 h12 M1466 442 h11" stroke="#777" stroke-width="0.6"/><rect x="1463.5" y="446.5" width="27" height="5" fill="#fff" stroke="#333" stroke-width="0.7"/><path d="M1471 449 h14" stroke="#555" stroke-width="0.6"/><rect x="1463.5" y="471.8" width="27" height="27" fill="#fff" stroke="#333" stroke-width="1"/><rect x="1463" y="471.3" width="28" height="4.5" fill="#000"/><rect x="1464.2" y="472.3" width="3" height="3" fill="#fff"/><rect x="1470" y="481" width="14" height="15" rx="1" fill="#c8862a"/><rect x="1471.5" y="483" width="11" height="12" fill="#f4f4f4"/><rect x="1474" y="479.5" width="6" height="3" fill="#888"/><rect x="1143" y="750.5" width="8" height="17" rx="4" fill="#7a7a7a"/><rect x="1127.5" y="772.5" width="25" height="24.5" fill="#efefef" stroke="#c4c4c4" stroke-width="1"/><rect x="1133.5" y="780.5" width="13.5" height="9" fill="#fff" stroke="#333" stroke-width="0.9"/><rect x="1133" y="780" width="14.5" height="2.5" fill="#111"/><rect x="1144" y="780.7" width="1" height="1" fill="#fff"/><rect x="243" y="736" width="684.5" height="7.8" rx="3.9" fill="#7b7b7b"/><rect x="1143" y="286" width="8" height="320" rx="4" fill="#7b7b7b"/><line x1="253.5" y1="802" x2="253.5" y2="842" stroke="#8a8a8a" stroke-width="1"/><line x1="254.5" y1="802" x2="254.5" y2="842" stroke="#f4f4f4" stroke-width="1"/><circle cx="509.4" cy="822" r="2.8" fill="#c6c6c6"/><circle cx="943.2" cy="822" r="2.8" fill="#c6c6c6"/><circle cx="1272.5" cy="822" r="2.8" fill="#c6c6c6"/><path d="M717.8 814 Q717.8 806 726 806 Q734.3 806 734.3 814 V827 Q734.3 835.5 726 835.5 Q717.8 835.5 717.8 827 Z" fill="#fff" stroke="#333" stroke-width="0.9"/><path d="M717.8 819 H734.3 M726 806 V819" stroke="#333" stroke-width="0.8"/><rect x="724.5" y="808.5" width="3" height="6.5" rx="1.5" fill="#fff" stroke="#333" stroke-width="0.7"/></svg>
</body></html>
